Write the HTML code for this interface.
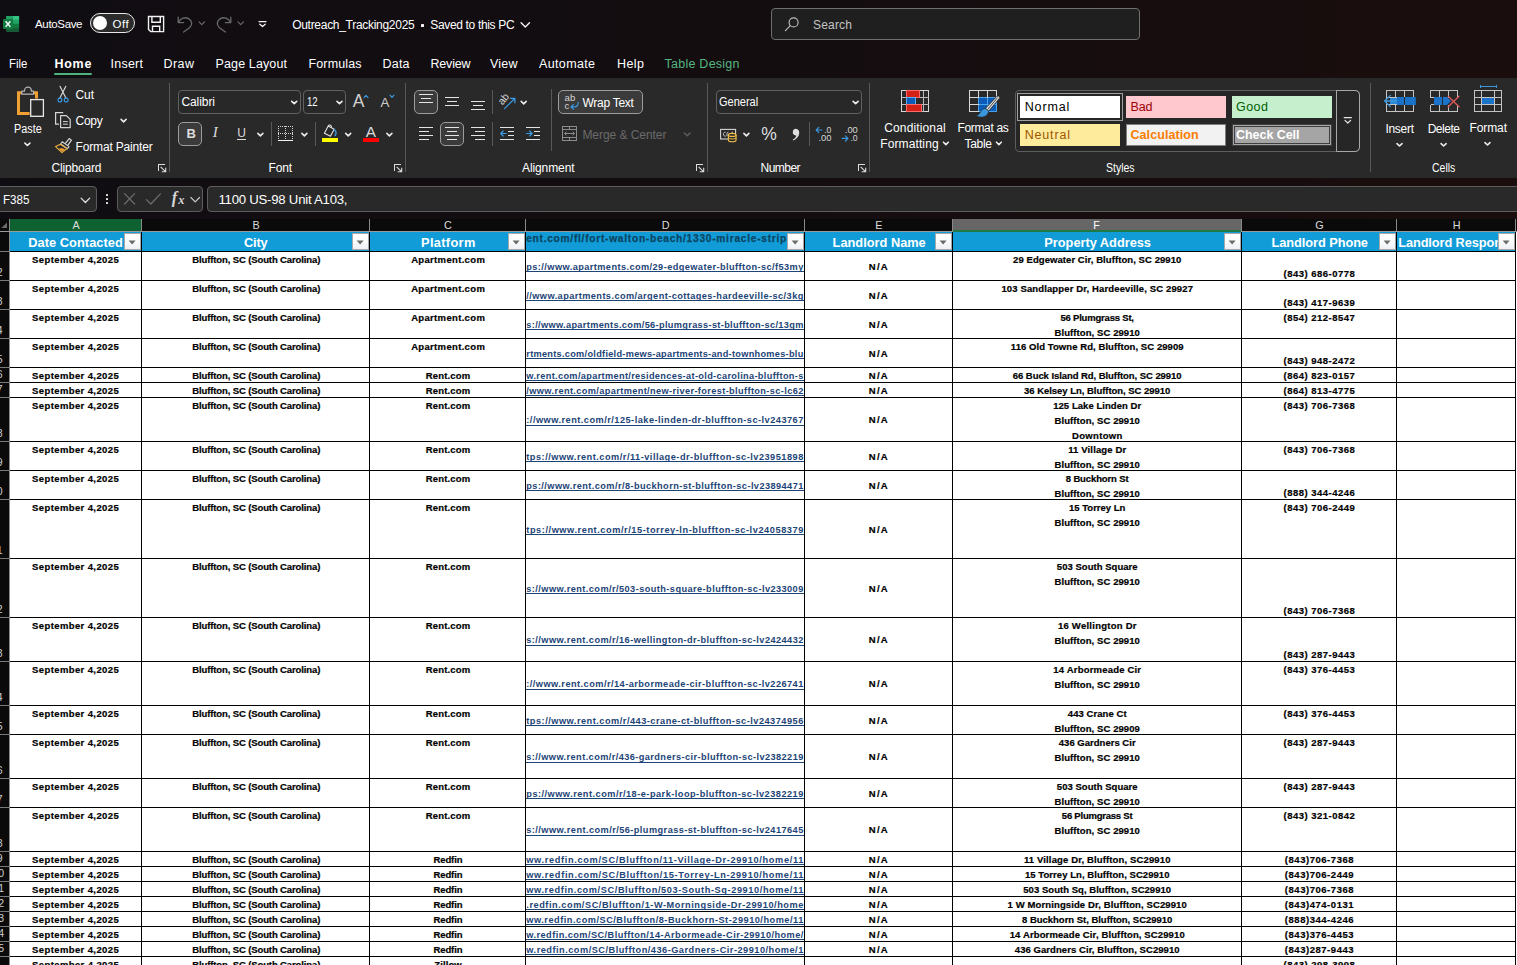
<!DOCTYPE html>
<html lang="en"><head><meta charset="utf-8"><title>Outreach_Tracking2025 - Excel</title>
<style>
html,body{margin:0;padding:0;}
body{width:1517px;height:965px;overflow:hidden;position:relative;background:#fff;font-family:"Liberation Sans",sans-serif;}
.b{position:absolute;display:block;}
.t{position:absolute;white-space:pre;line-height:1em;color:#fff;font-family:"Liberation Sans",sans-serif;}
.c{position:absolute;overflow:hidden;}
</style></head><body>
<div class="b" style="left:0px;top:0px;width:1517px;height:219px;background:linear-gradient(90deg,#100d12 0%,#130d10 45%,#1a0d0d 100%);"></div>
<div class="b" style="left:0px;top:78px;width:1517px;height:100px;background:#292929;"></div>
<svg class="b" style="left:0px;top:14px;" width="22" height="20" viewBox="0 0 22 20">
<rect x="6.1" y="2" width="13" height="16" rx="0.8" fill="#185c37"/>
<rect x="6.1" y="2" width="6.7" height="3.9" fill="#21a366"/><rect x="12.8" y="2" width="6.3" height="3.9" fill="#33c481"/>
<rect x="6.1" y="5.9" width="6.7" height="4" fill="#107c41"/><rect x="12.8" y="5.9" width="6.3" height="4" fill="#21a366"/>
<rect x="6.1" y="9.9" width="6.7" height="4" fill="#0e6a38"/><rect x="12.8" y="9.9" width="6.3" height="4" fill="#107c41"/>
<rect x="3" y="5.1" width="10.1" height="9.9" rx="0.8" fill="#107c41"/>
<path d="M5.6 7.2L10.4 12.9M10.4 7.2L5.6 12.9" stroke="#fff" stroke-width="1.45" fill="none"/></svg>
<span class="t" style="left:35.00px;top:19.00px;font-size:11.5px;letter-spacing:-0.339px;">AutoSave</span>
<div class="b" style="left:90px;top:13px;width:45px;height:20px;background:#2b2b2b;border:1.3px solid #e8e8e8;box-sizing:border-box;border-radius:10px;"></div>
<div class="b" style="left:93px;top:16px;width:14px;height:14px;background:#fff;border-radius:7px;"></div>
<span class="t" style="left:112.60px;top:19.00px;font-size:11.5px;letter-spacing:0.530px;">Off</span>
<svg class="b" style="left:147px;top:15px;" width="19" height="19" viewBox="0 0 19 19"><path d="M1.5 1.5H16.6V16.6H3.7L1.5 14.4Z" fill="none" stroke="#f2f2f2" stroke-width="1.4" stroke-linejoin="miter"/>
<path d="M4.9 1.5V7.2H13.3V1.5" fill="none" stroke="#f2f2f2" stroke-width="1.4"/><path d="M5.5 16.6V11.2H12.7V16.6" fill="none" stroke="#f2f2f2" stroke-width="1.4"/></svg>
<svg class="b" style="left:176px;top:14px;" width="18" height="19" viewBox="0 0 18 19"><path d="M2.2 3.2V8.6H7.6" fill="none" stroke="#6a6a6a" stroke-width="1.3" stroke-linecap="round" stroke-linejoin="round"/>
<path d="M2.6 8.2C4.4 4.4 9 2.6 12.6 4.6C16.4 6.8 16.6 11 13.8 13.4L7.6 18" fill="none" stroke="#6a6a6a" stroke-width="1.3" stroke-linecap="round"/></svg>
<svg class="b" style="left:0;top:0" width="1517" height="230" viewBox="0 0 1517 230"><path d="M199.05 21.90L201.80 24.70L204.55 21.90" fill="none" stroke="#6a6a6a" stroke-width="1.2" stroke-linecap="round" stroke-linejoin="round"/></svg>
<svg class="b" style="left:215px;top:14px;" width="18" height="19" viewBox="0 0 18 19"><path d="M15.8 3.2V8.6H10.4" fill="none" stroke="#6a6a6a" stroke-width="1.3" stroke-linecap="round" stroke-linejoin="round"/>
<path d="M15.4 8.2C13.6 4.4 9 2.6 5.4 4.6C1.6 6.8 1.4 11 4.2 13.4L10.4 18" fill="none" stroke="#6a6a6a" stroke-width="1.3" stroke-linecap="round"/></svg>
<svg class="b" style="left:0;top:0" width="1517" height="230" viewBox="0 0 1517 230"><path d="M237.95 21.90L240.70 24.70L243.45 21.90" fill="none" stroke="#6a6a6a" stroke-width="1.2" stroke-linecap="round" stroke-linejoin="round"/></svg>
<svg class="b" style="left:257px;top:19px;" width="11" height="10" viewBox="0 0 11 10"><path d="M2 2.6H9" stroke="#f2f2f2" stroke-width="1.3" stroke-linecap="round"/><path d="M2.8 5.2L5.5 7.6L8.2 5.2" fill="none" stroke="#f2f2f2" stroke-width="1.3" stroke-linecap="round" stroke-linejoin="round"/></svg>
<span class="t" style="left:292.20px;top:19.00px;font-size:12px;letter-spacing:-0.290px;">Outreach_Tracking2025</span>
<div class="b" style="left:421px;top:24px;width:3px;height:3px;background:#f2f2f2;border-radius:0.5px;"></div>
<span class="t" style="left:430.30px;top:19.00px;font-size:12px;letter-spacing:-0.339px;">Saved to this PC</span>
<svg class="b" style="left:0;top:0" width="1517" height="230" viewBox="0 0 1517 230"><path d="M521.10 22.80L525.30 27.00L529.50 22.80" fill="none" stroke="#f2f2f2" stroke-width="1.4" stroke-linecap="round" stroke-linejoin="round"/></svg>
<div class="b" style="left:771px;top:8px;width:368.5px;height:32px;background:#1f1f1f;border:1px solid #6f6f6f;box-sizing:border-box;border-radius:4px;"></div>
<svg class="b" style="left:783px;top:16px;" width="17" height="17" viewBox="0 0 17 17"><circle cx="10.6" cy="6.4" r="4.5" fill="none" stroke="#bdbdbd" stroke-width="1.15"/><path d="M7.3 9.7L2.4 14.6" stroke="#bdbdbd" stroke-width="1.15" stroke-linecap="round"/></svg>
<span class="t" style="left:813.00px;top:19.00px;font-size:12px;color:#c4c4c4;letter-spacing:0.194px;">Search</span>
<span class="t" style="left:9.30px;top:58.00px;font-size:12.5px;transform:scaleX(0.9129);transform-origin:0 0;">File</span>
<span class="t" style="left:54.40px;top:58.00px;font-size:12.5px;font-weight:700;letter-spacing:0.755px;">Home</span>
<div class="b" style="left:54px;top:73px;width:38px;height:2.4px;background:#4fb27c;border-radius:1.2px;"></div>
<span class="t" style="left:110.50px;top:58.00px;font-size:12.5px;letter-spacing:0.247px;">Insert</span>
<span class="t" style="left:163.50px;top:58.00px;font-size:12.5px;letter-spacing:0.443px;">Draw</span>
<span class="t" style="left:215.50px;top:58.00px;font-size:12.5px;letter-spacing:0.130px;">Page Layout</span>
<span class="t" style="left:308.50px;top:58.00px;font-size:12.5px;letter-spacing:0.129px;">Formulas</span>
<span class="t" style="left:382.50px;top:58.00px;font-size:12.5px;letter-spacing:0.198px;">Data</span>
<span class="t" style="left:430.50px;top:58.00px;font-size:12.5px;letter-spacing:-0.200px;">Review</span>
<span class="t" style="left:490.00px;top:58.00px;font-size:12.5px;letter-spacing:0.208px;">View</span>
<span class="t" style="left:539.00px;top:58.00px;font-size:12.5px;letter-spacing:0.355px;">Automate</span>
<span class="t" style="left:617.00px;top:58.00px;font-size:12.5px;letter-spacing:0.427px;">Help</span>
<span class="t" style="left:664.50px;top:58.00px;font-size:12.5px;color:#55b581;letter-spacing:0.249px;">Table Design</span>
<div class="b" style="left:169px;top:83px;width:1px;height:89px;background:#585858;"></div>
<div class="b" style="left:405px;top:83px;width:1px;height:89px;background:#585858;"></div>
<div class="b" style="left:707px;top:83px;width:1px;height:89px;background:#585858;"></div>
<div class="b" style="left:869px;top:83px;width:1px;height:89px;background:#585858;"></div>
<div class="b" style="left:1370px;top:83px;width:1px;height:89px;background:#585858;"></div>
<div class="b" style="left:271px;top:122px;width:1px;height:24px;background:#585858;"></div>
<div class="b" style="left:315px;top:122px;width:1px;height:24px;background:#585858;"></div>
<div class="b" style="left:492px;top:90px;width:1px;height:24px;background:#585858;"></div>
<div class="b" style="left:492px;top:122px;width:1px;height:24px;background:#585858;"></div>
<div class="b" style="left:551px;top:89px;width:1px;height:62px;background:#585858;"></div>
<div class="b" style="left:809px;top:122px;width:1px;height:24px;background:#585858;"></div>
<svg class="b" style="left:15px;top:85px;" width="31" height="34" viewBox="0 0 31 34">
<path d="M21.5 13.6V7.7H3.5V28.5H14.6" fill="none" stroke="#f0a030" stroke-width="3"/>
<path d="M6.8 9.2V6.2H9.4C9.4 0.8 16.4 0.8 16.4 6.2H18.6V9.2Z" fill="#292929" stroke="#b4b4b4" stroke-width="1.2" stroke-linejoin="round"/>
<rect x="15.7" y="14.6" width="12.7" height="16.7" fill="#292929" stroke="#e8e8e8" stroke-width="1.3"/></svg>
<span class="t" style="left:14.40px;top:123.00px;font-size:12px;transform:scaleX(0.9026);transform-origin:0 0;">Paste</span>
<svg class="b" style="left:0;top:0" width="1517" height="230" viewBox="0 0 1517 230"><path d="M24.90 143.10L27.40 145.50L29.90 143.10" fill="none" stroke="#ececec" stroke-width="1.6" stroke-linecap="round" stroke-linejoin="round"/></svg>
<svg class="b" style="left:56px;top:85px;" width="14" height="18" viewBox="0 0 14 18"><path d="M4.1 1.4L10 13.2M9.7 1.4L3.8 13.2" stroke="#d6d6d6" stroke-width="1.2" fill="none" stroke-linecap="round"/>
<rect x="2.1" y="13.1" width="3.7" height="3.7" rx="1.3" fill="none" stroke="#3a96dd" stroke-width="1.2"/><rect x="8.3" y="13.1" width="3.7" height="3.7" rx="1.3" fill="none" stroke="#3a96dd" stroke-width="1.2"/></svg>
<span class="t" style="left:75.60px;top:89.00px;font-size:12px;letter-spacing:-0.144px;">Cut</span>
<svg class="b" style="left:54px;top:111px;" width="18" height="18" viewBox="0 0 18 18"><path d="M9.2 1.6H1.6V13.2H5" fill="none" stroke="#d6d6d6" stroke-width="1.2"/>
<path d="M6.6 4.6H12.4L16.2 8.4V16.6H6.6Z" fill="#292929" stroke="#d6d6d6" stroke-width="1.2" stroke-linejoin="round"/>
<path d="M9 10.6H13.8M9 13.2H13.8" stroke="#d6d6d6" stroke-width="1"/></svg>
<span class="t" style="left:75.60px;top:115.00px;font-size:12px;letter-spacing:-0.305px;">Copy</span>
<svg class="b" style="left:0;top:0" width="1517" height="230" viewBox="0 0 1517 230"><path d="M121.10 119.40L123.60 121.80L126.10 119.40" fill="none" stroke="#ececec" stroke-width="1.6" stroke-linecap="round" stroke-linejoin="round"/></svg>
<svg class="b" style="left:54px;top:137px;" width="19" height="17" viewBox="0 0 19 17"><path d="M11.2 6.6L15.2 1.6L17.4 3.2L13.8 8.4" fill="none" stroke="#d6d6d6" stroke-width="1.2" stroke-linejoin="round"/>
<path d="M8.2 4.8L15 9.6L13.4 11.8L6.6 7Z" fill="none" stroke="#d6d6d6" stroke-width="1.1" stroke-linejoin="round"/>
<path d="M6.4 7.2L1.6 9.6L8 15.6L13 11.6Z" fill="none" stroke="#f0b040" stroke-width="1.1" stroke-linejoin="round"/><path d="M4.6 11.6L8 14.8L11 12.4L8.6 11.2Z" fill="#f0a030"/></svg>
<span class="t" style="left:75.60px;top:141.00px;font-size:12px;letter-spacing:-0.166px;">Format Painter</span>
<span class="t" style="left:51.60px;top:162.00px;font-size:12px;letter-spacing:-0.184px;">Clipboard</span>
<svg class="b" style="left:158px;top:164px;" width="9" height="9" viewBox="0 0 9 9"><path d="M0.5 7V0.6H6.8" fill="none" stroke="#dcdcdc" stroke-width="1" shape-rendering="crispEdges"/><path d="M2.6 2.8L7.5 7.7M3.7 7.7H7.7V3.7" fill="none" stroke="#dcdcdc" stroke-width="1.1"/></svg>
<div class="b" style="left:178px;top:90px;width:123px;height:24px;background:#282828;border:1px solid #616161;box-sizing:border-box;border-radius:4px;"></div>
<span class="t" style="left:181.40px;top:96.00px;font-size:12px;letter-spacing:-0.069px;">Calibri</span>
<svg class="b" style="left:0;top:0" width="1517" height="230" viewBox="0 0 1517 230"><path d="M291.70 101.30L294.20 103.70L296.70 101.30" fill="none" stroke="#ececec" stroke-width="1.6" stroke-linecap="round" stroke-linejoin="round"/></svg>
<div class="b" style="left:303px;top:90px;width:43px;height:24px;background:#282828;border:1px solid #616161;box-sizing:border-box;border-radius:4px;"></div>
<span class="t" style="left:307.30px;top:96.00px;font-size:12px;transform:scaleX(0.8009);transform-origin:0 0;">12</span>
<svg class="b" style="left:0;top:0" width="1517" height="230" viewBox="0 0 1517 230"><path d="M337.00 101.30L339.50 103.70L342.00 101.30" fill="none" stroke="#ececec" stroke-width="1.6" stroke-linecap="round" stroke-linejoin="round"/></svg>
<span class="t" style="left:352.80px;top:93.00px;font-size:17.5px;color:#d0d0d0;">A</span>
<svg class="b" style="left:363.2px;top:93.6px;" width="7" height="5" viewBox="0 0 7 5"><path d="M1 3.6L3 1.4L5 3.6" fill="none" stroke="#3a96dd" stroke-width="1.2" stroke-linecap="round" stroke-linejoin="round"/></svg>
<span class="t" style="left:380.40px;top:96.00px;font-size:13.3px;color:#d0d0d0;">A</span>
<svg class="b" style="left:388.6px;top:93.8px;" width="7" height="5" viewBox="0 0 7 5"><path d="M1 1.2L3 3.4L5 1.2" fill="none" stroke="#3a96dd" stroke-width="1.2" stroke-linecap="round" stroke-linejoin="round"/></svg>
<div class="b" style="left:178px;top:122px;width:24px;height:24px;background:#3b3b3b;border:1px solid #9c9c9c;box-sizing:border-box;border-radius:5px;"></div>
<span class="t" style="left:186.60px;top:127.00px;font-size:13px;font-weight:700;color:#dcdcdc;">B</span>
<span class="t" style="left:212.80px;top:125.00px;font-size:15px;font-style:italic;color:#dcdcdc;font-family:'Liberation Serif';">I</span>
<span class="t" style="left:237.20px;top:127.00px;font-size:12px;color:#dcdcdc;">U</span>
<div class="b" style="left:237px;top:139px;width:9.4px;height:1.1px;background:#dcdcdc;"></div>
<svg class="b" style="left:0;top:0" width="1517" height="230" viewBox="0 0 1517 230"><path d="M257.90 133.40L260.40 135.80L262.90 133.40" fill="none" stroke="#ececec" stroke-width="1.6" stroke-linecap="round" stroke-linejoin="round"/></svg>
<svg class="b" style="left:277px;top:124px;" width="17" height="19" viewBox="0 0 17 19"><g shape-rendering="crispEdges" fill="none" stroke="#d0d0d0" stroke-width="1" stroke-dasharray="1 1"><path d="M1 2.5H16M1 9.5H16M1.5 2V16M8.5 2V16M15.5 2V16"/></g>
<path d="M1 16.6H16" stroke="#f0f0f0" stroke-width="1.4" shape-rendering="crispEdges"/></svg>
<svg class="b" style="left:0;top:0" width="1517" height="230" viewBox="0 0 1517 230"><path d="M301.90 133.40L304.40 135.80L306.90 133.40" fill="none" stroke="#ececec" stroke-width="1.6" stroke-linecap="round" stroke-linejoin="round"/></svg>
<svg class="b" style="left:321px;top:124px;" width="18" height="14" viewBox="0 0 18 14"><path d="M7.2 2L3.4 9.2L9.4 12.2L13.2 5.2Z" fill="none" stroke="#e0e0e0" stroke-width="1.1" stroke-linejoin="round"/>
<path d="M7.2 2C8 0.4 10.4 0.6 10.6 3.6" fill="none" stroke="#e0e0e0" stroke-width="1.1"/>
<path d="M13.4 5.6C15.2 7 15.4 9.6 14.2 11.4" fill="none" stroke="#3a96dd" stroke-width="1.6" stroke-linecap="round"/></svg>
<div class="b" style="left:322px;top:138px;width:16px;height:4.2px;background:#ffff00;"></div>
<svg class="b" style="left:0;top:0" width="1517" height="230" viewBox="0 0 1517 230"><path d="M345.70 133.40L348.20 135.80L350.70 133.40" fill="none" stroke="#ececec" stroke-width="1.6" stroke-linecap="round" stroke-linejoin="round"/></svg>
<span class="t" style="left:365.80px;top:124.00px;font-size:15.3px;color:#dcdcdc;">A</span>
<div class="b" style="left:363px;top:138px;width:16.2px;height:4.2px;background:#ff0000;"></div>
<svg class="b" style="left:0;top:0" width="1517" height="230" viewBox="0 0 1517 230"><path d="M386.90 133.40L389.40 135.80L391.90 133.40" fill="none" stroke="#ececec" stroke-width="1.6" stroke-linecap="round" stroke-linejoin="round"/></svg>
<span class="t" style="left:268.40px;top:162.00px;font-size:12px;letter-spacing:-0.072px;">Font</span>
<svg class="b" style="left:394px;top:164px;" width="9" height="9" viewBox="0 0 9 9"><path d="M0.5 7V0.6H6.8" fill="none" stroke="#dcdcdc" stroke-width="1" shape-rendering="crispEdges"/><path d="M2.6 2.8L7.5 7.7M3.7 7.7H7.7V3.7" fill="none" stroke="#dcdcdc" stroke-width="1.1"/></svg>
<div class="b" style="left:414px;top:90px;width:24px;height:24px;background:#3b3b3b;border:1px solid #9c9c9c;box-sizing:border-box;border-radius:5px;"></div>
<div class="b" style="left:419.0px;top:94px;width:14px;height:1px;background:#e4e4e4;"></div>
<div class="b" style="left:421.0px;top:98px;width:10px;height:1px;background:#e4e4e4;"></div>
<div class="b" style="left:419.0px;top:102px;width:14px;height:1px;background:#e4e4e4;"></div>
<div class="b" style="left:445.0px;top:97px;width:14px;height:1px;background:#e4e4e4;"></div>
<div class="b" style="left:447.0px;top:101px;width:10px;height:1px;background:#e4e4e4;"></div>
<div class="b" style="left:445.0px;top:105px;width:14px;height:1px;background:#e4e4e4;"></div>
<div class="b" style="left:471.0px;top:101px;width:14px;height:1px;background:#e4e4e4;"></div>
<div class="b" style="left:473.0px;top:105px;width:10px;height:1px;background:#e4e4e4;"></div>
<div class="b" style="left:471.0px;top:109px;width:14px;height:1px;background:#e4e4e4;"></div>
<svg class="b" style="left:498px;top:92px;" width="19" height="19" viewBox="0 0 19 19"><text x="0" y="0" transform="translate(4.4 13.6) rotate(-50)" font-family="Liberation Sans" font-size="10.4" fill="#d6d6d6">ab</text>
<path d="M6.5 16.7L16.7 6.5M12.4 6.3H16.9V10.8" fill="none" stroke="#3a9be6" stroke-width="1.2" stroke-linecap="round" stroke-linejoin="round"/></svg>
<svg class="b" style="left:0;top:0" width="1517" height="230" viewBox="0 0 1517 230"><path d="M521.20 101.40L523.70 103.80L526.20 101.40" fill="none" stroke="#ececec" stroke-width="1.6" stroke-linecap="round" stroke-linejoin="round"/></svg>
<div class="b" style="left:419.0px;top:127px;width:14px;height:1px;background:#e4e4e4;"></div>
<div class="b" style="left:419.0px;top:131px;width:10px;height:1px;background:#e4e4e4;"></div>
<div class="b" style="left:419.0px;top:135px;width:14px;height:1px;background:#e4e4e4;"></div>
<div class="b" style="left:419.0px;top:139px;width:10px;height:1px;background:#e4e4e4;"></div>
<div class="b" style="left:440px;top:122px;width:24px;height:24px;background:#3b3b3b;border:1px solid #9c9c9c;box-sizing:border-box;border-radius:5px;"></div>
<div class="b" style="left:445.0px;top:127px;width:14px;height:1px;background:#e4e4e4;"></div>
<div class="b" style="left:447.0px;top:131px;width:10px;height:1px;background:#e4e4e4;"></div>
<div class="b" style="left:445.0px;top:135px;width:14px;height:1px;background:#e4e4e4;"></div>
<div class="b" style="left:447.0px;top:139px;width:10px;height:1px;background:#e4e4e4;"></div>
<div class="b" style="left:471.0px;top:127px;width:14px;height:1px;background:#e4e4e4;"></div>
<div class="b" style="left:475.0px;top:131px;width:10px;height:1px;background:#e4e4e4;"></div>
<div class="b" style="left:471.0px;top:135px;width:14px;height:1px;background:#e4e4e4;"></div>
<div class="b" style="left:475.0px;top:139px;width:10px;height:1px;background:#e4e4e4;"></div>
<div class="b" style="left:500.0px;top:127px;width:14px;height:1px;background:#e4e4e4;"></div>
<div class="b" style="left:500.0px;top:139px;width:14px;height:1px;background:#e4e4e4;"></div>
<div class="b" style="left:508.0px;top:131px;width:6px;height:1px;background:#e4e4e4;"></div>
<div class="b" style="left:508.0px;top:135px;width:6px;height:1px;background:#e4e4e4;"></div>
<svg class="b" style="left:499.5px;top:129px;" width="8" height="8" viewBox="0 0 8 8"><path d="M6.2 4.5H1M3.2 2L0.7 4.5L3.2 7" fill="none" stroke="#3a9be6" stroke-width="1.15" stroke-linecap="round" stroke-linejoin="round"/></svg>
<div class="b" style="left:526.0px;top:127px;width:14px;height:1px;background:#e4e4e4;"></div>
<div class="b" style="left:526.0px;top:139px;width:14px;height:1px;background:#e4e4e4;"></div>
<div class="b" style="left:534.0px;top:131px;width:6px;height:1px;background:#e4e4e4;"></div>
<div class="b" style="left:534.0px;top:135px;width:6px;height:1px;background:#e4e4e4;"></div>
<svg class="b" style="left:525.5px;top:129px;" width="8" height="8" viewBox="0 0 8 8"><path d="M0.6 4.5H5.8M3.6 2L6.1 4.5L3.6 7" fill="none" stroke="#3a9be6" stroke-width="1.15" stroke-linecap="round" stroke-linejoin="round"/></svg>
<div class="b" style="left:558px;top:90px;width:85px;height:24px;background:#3b3b3b;border:1px solid #9c9c9c;box-sizing:border-box;border-radius:5px;"></div>
<svg class="b" style="left:563.5px;top:93px;" width="16" height="18" viewBox="0 0 16 18"><text x="0.6" y="7.9" font-family="Liberation Sans" font-size="9.6" fill="#d6d6d6">ab</text><text x="0.6" y="15.6" font-family="Liberation Sans" font-size="9.6" fill="#d6d6d6">c</text>
<path d="M14.2 9.4C14.6 12.4 12.6 13.9 10.4 13.9H7.2M9.4 11.6L7 13.9L9.4 16.2" fill="none" stroke="#3a9be6" stroke-width="1.2" stroke-linecap="round" stroke-linejoin="round"/></svg>
<span class="t" style="left:582.40px;top:97.00px;font-size:12px;letter-spacing:-0.260px;">Wrap Text</span>
<svg class="b" style="left:562px;top:126px;" width="16" height="16" viewBox="0 0 16 16"><g shape-rendering="crispEdges" fill="none" stroke="#8c8c8c" stroke-width="1"><rect x="0.5" y="0.5" width="14" height="14"/>
<path d="M0.5 3.5H14.5M0.5 11.5H14.5M7.5 0.5V3.5M7.5 11.5V14.5"/></g>
<path d="M2.6 7.5H12.4M4.4 5.7L2.6 7.5L4.4 9.3M10.6 5.7L12.4 7.5L10.6 9.3" stroke="#8c8c8c" stroke-width="1" fill="none"/></svg>
<span class="t" style="left:582.40px;top:129.00px;font-size:12px;color:#6b6b6b;letter-spacing:-0.046px;">Merge &amp; Center</span>
<svg class="b" style="left:0;top:0" width="1517" height="230" viewBox="0 0 1517 230"><path d="M684.40 133.00L687.20 135.80L690.00 133.00" fill="none" stroke="#5c5c5c" stroke-width="1.6" stroke-linecap="round" stroke-linejoin="round"/></svg>
<span class="t" style="left:522.00px;top:162.00px;font-size:12px;letter-spacing:-0.097px;">Alignment</span>
<svg class="b" style="left:696px;top:164px;" width="9" height="9" viewBox="0 0 9 9"><path d="M0.5 7V0.6H6.8" fill="none" stroke="#dcdcdc" stroke-width="1" shape-rendering="crispEdges"/><path d="M2.6 2.8L7.5 7.7M3.7 7.7H7.7V3.7" fill="none" stroke="#dcdcdc" stroke-width="1.1"/></svg>
<div class="b" style="left:716px;top:90px;width:146px;height:24px;background:#282828;border:1px solid #616161;box-sizing:border-box;border-radius:4px;"></div>
<span class="t" style="left:719.30px;top:96.00px;font-size:12px;transform:scaleX(0.9180);transform-origin:0 0;">General</span>
<svg class="b" style="left:0;top:0" width="1517" height="230" viewBox="0 0 1517 230"><path d="M853.10 101.30L855.60 103.70L858.10 101.30" fill="none" stroke="#ececec" stroke-width="1.6" stroke-linecap="round" stroke-linejoin="round"/></svg>
<svg class="b" style="left:719px;top:128px;" width="19" height="15" viewBox="0 0 19 15"><rect x="1.6" y="1.4" width="15" height="9.6" fill="none" stroke="#d6d6d6" stroke-width="1.1"/>
<path d="M6.6 4.2C5 4.2 4.4 5.2 4.4 6.2C4.4 7.2 5 8.2 6.6 8.2M9.4 4.2C8.4 4.2 8 5 8 6.2V8.2M12.6 4.2H13.8" stroke="#d6d6d6" stroke-width="1" fill="none"/>
<path d="M9.4 6.9V12.2C9.4 14.2 17 14.2 17 12.2V6.9" fill="#292929" stroke="#f2c14a" stroke-width="1.1"/>
<ellipse cx="13.2" cy="6.9" rx="3.8" ry="1.5" fill="#292929" stroke="#f2c14a" stroke-width="1.1"/><path d="M9.4 9.6C9.4 11.4 17 11.4 17 9.6" fill="none" stroke="#f2c14a" stroke-width="1"/></svg>
<svg class="b" style="left:0;top:0" width="1517" height="230" viewBox="0 0 1517 230"><path d="M743.90 133.40L746.40 135.80L748.90 133.40" fill="none" stroke="#ececec" stroke-width="1.6" stroke-linecap="round" stroke-linejoin="round"/></svg>
<span class="t" style="left:761.20px;top:126.00px;font-size:17.5px;color:#dedede;">%</span>
<svg class="b" style="left:791px;top:128px;" width="10" height="14" viewBox="0 0 10 14"><path d="M4.8 0.8C7.4 0.8 8.6 3 8.2 5.6C7.8 8.6 5.6 11.2 2.2 12.4L1.8 11.6C4 10.4 5 9 5.2 7.4C2.6 7.6 1.6 5.8 1.8 4C2 2 3.2 0.8 4.8 0.8Z" fill="#dedede"/></svg>
<svg class="b" style="left:815px;top:125px;" width="18" height="18" viewBox="0 0 18 18"><path d="M7 5H1.4M3.8 2.4L1.2 5L3.8 7.6" fill="none" stroke="#3a96dd" stroke-width="1.2" stroke-linecap="round" stroke-linejoin="round"/>
<text x="9.2" y="7.6" font-family="Liberation Sans" font-size="9.2" fill="#d6d6d6" textLength="7.2" lengthAdjust="spacingAndGlyphs">.0</text><text x="3.4" y="15.8" font-family="Liberation Sans" font-size="9.2" fill="#d6d6d6" textLength="13" lengthAdjust="spacingAndGlyphs">.00</text></svg>
<svg class="b" style="left:841px;top:125px;" width="18" height="18" viewBox="0 0 18 18"><text x="3.8" y="7.6" font-family="Liberation Sans" font-size="9.2" fill="#d6d6d6" textLength="13" lengthAdjust="spacingAndGlyphs">.00</text>
<path d="M1.2 13.4H6.8M4.4 10.8L7 13.4L4.4 16" fill="none" stroke="#3a96dd" stroke-width="1.2" stroke-linecap="round" stroke-linejoin="round"/>
<text x="9.4" y="15.8" font-family="Liberation Sans" font-size="9.2" fill="#d6d6d6" textLength="7.2" lengthAdjust="spacingAndGlyphs">.0</text></svg>
<span class="t" style="left:760.60px;top:162.00px;font-size:12px;letter-spacing:-0.537px;">Number</span>
<svg class="b" style="left:858px;top:164px;" width="9" height="9" viewBox="0 0 9 9"><path d="M0.5 7V0.6H6.8" fill="none" stroke="#dcdcdc" stroke-width="1" shape-rendering="crispEdges"/><path d="M2.6 2.8L7.5 7.7M3.7 7.7H7.7V3.7" fill="none" stroke="#dcdcdc" stroke-width="1.1"/></svg>
<svg class="b" style="left:900px;top:89px;" width="31" height="24" viewBox="0 0 31 24"><g shape-rendering="crispEdges" fill="none" stroke="#d8d8d8" stroke-width="1"><rect x="1.5" y="1.5" width="27" height="21"/>
<path d="M1.5 8.5H28.5M1.5 15.5H28.5M6.5 1.5V22.5M23.5 1.5V22.5" stroke="#b8b8b8"/></g>
<rect x="6.5" y="1.5" width="12.5" height="6.5" fill="#d42115" stroke="#ff6b6b" stroke-width="1" shape-rendering="crispEdges"/>
<rect x="6.5" y="8.5" width="8.5" height="6.5" fill="#0a5cb8" stroke="#58aef0" stroke-width="1" shape-rendering="crispEdges"/>
<rect x="6.5" y="15.5" width="14.5" height="7" fill="#d42115" stroke="#ff6b6b" stroke-width="1" shape-rendering="crispEdges"/></svg>
<span class="t" style="left:884.20px;top:122.00px;font-size:12px;letter-spacing:0.145px;">Conditional</span>
<span class="t" style="left:880.30px;top:138.00px;font-size:12px;letter-spacing:0.105px;">Formatting</span>
<svg class="b" style="left:0;top:0" width="1517" height="230" viewBox="0 0 1517 230"><path d="M943.50 142.20L945.90 144.60L948.30 142.20" fill="none" stroke="#ececec" stroke-width="1.6" stroke-linecap="round" stroke-linejoin="round"/></svg>
<svg class="b" style="left:968px;top:89px;" width="33" height="29" viewBox="0 0 33 29"><rect x="10.5" y="8.5" width="18" height="14" fill="#0a5cb8" shape-rendering="crispEdges"/>
<g shape-rendering="crispEdges" fill="none" stroke-width="1"><path d="M10.5 15.5H28.5M19.5 8.5V22.5M10.5 8.5H28.5M10.5 8.5V22.5M28.5 8.5V22.5M10.5 22.5H28.5" stroke="#4aa3e8"/>
<path d="M1.5 22.5V1.5H28.5V8.5M1.5 22.5H10.5M1.5 8.5H10.5M1.5 15.5H10.5M10.5 1.5V8.5M19.5 1.5V8.5" stroke="#d8d8d8"/></g>
<path d="M29 7.2C30.6 6.2 32.4 7.8 31.4 9.4L20.8 22L17.4 19.4Z" fill="#dcdcdc" stroke="#292929" stroke-width="0.9"/><path d="M29.6 8.6L20 20" stroke="#292929" stroke-width="0.8"/>
<path d="M17.4 19.4L20.6 22C20.2 27 14.4 30 8.2 26.8C12.6 26 12.4 19.6 17.4 19.4Z" fill="#3a96dd" stroke="#292929" stroke-width="0.6"/></svg>
<span class="t" style="left:957.40px;top:122.00px;font-size:12px;letter-spacing:-0.327px;">Format as</span>
<span class="t" style="left:964.60px;top:138.00px;font-size:12px;letter-spacing:-0.347px;">Table</span>
<svg class="b" style="left:0;top:0" width="1517" height="230" viewBox="0 0 1517 230"><path d="M996.50 142.20L998.90 144.60L1001.30 142.20" fill="none" stroke="#ececec" stroke-width="1.6" stroke-linecap="round" stroke-linejoin="round"/></svg>
<div class="b" style="left:1015px;top:90px;width:345px;height:62px;background:#262626;border:1px solid #5e5e5e;box-sizing:border-box;border-radius:4px;"></div>
<div class="b" style="left:1336px;top:90px;width:24px;height:62px;border:1px solid #a8a8a8;box-sizing:border-box;border-radius:0 5px 5px 0;"></div>
<div class="b" style="left:1017px;top:93px;width:106px;height:28px;background:#262626;border:1px solid #a0a0a0;box-sizing:border-box;"></div>
<div class="b" style="left:1020px;top:96px;width:100.3px;height:22px;background:#ffffff;"></div>
<div class="b" style="left:1126px;top:96px;width:100px;height:22px;background:#ffc7ce;"></div>
<div class="b" style="left:1232px;top:96px;width:100px;height:22px;background:#c6efce;"></div>
<div class="b" style="left:1020px;top:124.3px;width:100.3px;height:22px;background:#ffeb9c;"></div>
<div class="b" style="left:1126px;top:124.3px;width:100px;height:22px;background:#f2f2f2;border:1px solid #7f7f7f;box-sizing:border-box;"></div>
<div class="b" style="left:1232px;top:124.3px;width:100px;height:22px;background:#a5a5a5;border:3px double #3f3f3f;box-sizing:border-box;"></div>
<span class="t" style="left:1024.70px;top:101.00px;font-size:12.5px;color:#000;letter-spacing:0.861px;">Normal</span>
<span class="t" style="left:1130.50px;top:101.00px;font-size:12.5px;color:#9c0006;letter-spacing:-0.175px;">Bad</span>
<span class="t" style="left:1236.00px;top:101.00px;font-size:12.5px;color:#006100;letter-spacing:0.469px;">Good</span>
<span class="t" style="left:1024.70px;top:129.00px;font-size:12.5px;color:#9c5700;letter-spacing:0.834px;">Neutral</span>
<span class="t" style="left:1130.50px;top:129.00px;font-size:12.5px;font-weight:700;color:#fa7d00;letter-spacing:0.072px;">Calculation</span>
<span class="t" style="left:1236.00px;top:129.00px;font-size:12.5px;font-weight:700;color:#ffffff;letter-spacing:-0.047px;">Check Cell</span>
<svg class="b" style="left:1343px;top:116px;" width="10" height="9" viewBox="0 0 10 9"><path d="M1.2 1.6H8.4" stroke="#e6e6e6" stroke-width="1.2" stroke-linecap="round"/><path d="M2 4.4L4.8 7L7.6 4.4" fill="none" stroke="#e6e6e6" stroke-width="1.2" stroke-linecap="round" stroke-linejoin="round"/></svg>
<span class="t" style="left:1106.00px;top:162.00px;font-size:12px;transform:scaleX(0.8750);transform-origin:0 0;">Styles</span>
<svg class="b" style="left:1383px;top:85px;" width="34" height="28" viewBox="0 0 34 28"><g shape-rendering="crispEdges" fill="none" stroke="#c4c4c4" stroke-width="1"><rect x="3.5" y="5.5" width="27" height="21"/>
<path d="M3.5 12.5H30.5M3.5 19.5H30.5M12.5 5.5V26.5M21.5 5.5V26.5"/></g>
<rect x="14" y="12" width="18.8" height="8" fill="#1a73c8"/><rect x="7" y="13" width="7" height="6" fill="#2b88d8"/>
<path d="M21.5 12V20" stroke="#292929" stroke-width="1" shape-rendering="crispEdges"/>
<path d="M13.6 16H1.8M7.4 10.4L1.6 16L7.4 21.6" fill="none" stroke="#3a96dd" stroke-width="1.3" stroke-linecap="round" stroke-linejoin="round"/></svg>
<span class="t" style="left:1385.40px;top:123.00px;font-size:12px;letter-spacing:-0.263px;">Insert</span>
<svg class="b" style="left:0;top:0" width="1517" height="230" viewBox="0 0 1517 230"><path d="M1397.00 143.60L1399.50 146.00L1402.00 143.60" fill="none" stroke="#ececec" stroke-width="1.6" stroke-linecap="round" stroke-linejoin="round"/></svg>
<svg class="b" style="left:1427px;top:85px;" width="34" height="28" viewBox="0 0 34 28"><g shape-rendering="crispEdges" fill="none" stroke="#c4c4c4" stroke-width="1"><path d="M3.5 12.5V5.5H30.5V12.5M3.5 19.5V26.5H30.5V19.5M12.5 5.5V12.5M21.5 5.5V12.5M12.5 19.5V26.5M21.5 19.5V26.5M3.5 12.5H7.5M3.5 19.5H7.5"/></g>
<path d="M7 12H20L24 16L20 20H7Z" fill="#1a73c8"/><path d="M15.5 12V20" stroke="#292929" stroke-width="1" shape-rendering="crispEdges"/>
<path d="M21.2 11.2L32 21.8M32 11.2L21.2 21.8" stroke="#e05a5a" stroke-width="1.3" stroke-linecap="round"/></svg>
<span class="t" style="left:1427.70px;top:123.00px;font-size:12px;letter-spacing:-0.497px;">Delete</span>
<svg class="b" style="left:0;top:0" width="1517" height="230" viewBox="0 0 1517 230"><path d="M1441.10 143.60L1443.60 146.00L1446.10 143.60" fill="none" stroke="#ececec" stroke-width="1.6" stroke-linecap="round" stroke-linejoin="round"/></svg>
<svg class="b" style="left:1471px;top:84px;" width="34" height="29" viewBox="0 0 34 29"><path d="M9.5 2.5H25.5M9.5 0.8V4.2M25.5 0.8V4.2" stroke="#3a96dd" stroke-width="1" fill="none" shape-rendering="crispEdges"/>
<g shape-rendering="crispEdges" fill="none" stroke="#c4c4c4" stroke-width="1"><rect x="3.5" y="6.5" width="27" height="21"/>
<path d="M3.5 13.5H30.5M3.5 20.5H30.5M10.5 6.5V27.5M23.5 6.5V27.5"/></g>
<rect x="11" y="14" width="12" height="6" fill="#1a73c8"/></svg>
<span class="t" style="left:1469.40px;top:122.00px;font-size:12px;letter-spacing:-0.083px;">Format</span>
<svg class="b" style="left:0;top:0" width="1517" height="230" viewBox="0 0 1517 230"><path d="M1485.00 142.60L1487.50 145.00L1490.00 142.60" fill="none" stroke="#ececec" stroke-width="1.6" stroke-linecap="round" stroke-linejoin="round"/></svg>
<span class="t" style="left:1432.40px;top:162.00px;font-size:12px;transform:scaleX(0.8736);transform-origin:0 0;">Cells</span>
<div class="b" style="left:-6px;top:186px;width:102.5px;height:26px;background:#292929;border:1px solid #5c5c5c;box-sizing:border-box;border-radius:4px;"></div>
<span class="t" style="left:2.80px;top:193.00px;font-size:13.6px;transform:scaleX(0.8553);transform-origin:0 0;">F385</span>
<svg class="b" style="left:0;top:0" width="1517" height="230" viewBox="0 0 1517 230"><path d="M81.10 198.10L85.40 202.50L89.70 198.10" fill="none" stroke="#e0e0e0" stroke-width="1.3" stroke-linecap="round" stroke-linejoin="round"/></svg>
<div class="b" style="left:105.6px;top:194px;width:2.2px;height:2.2px;background:#e6e6e6;border-radius:0.6px;"></div>
<div class="b" style="left:105.6px;top:198px;width:2.2px;height:2.2px;background:#e6e6e6;border-radius:0.6px;"></div>
<div class="b" style="left:105.6px;top:202px;width:2.2px;height:2.2px;background:#e6e6e6;border-radius:0.6px;"></div>
<div class="b" style="left:117px;top:186px;width:86px;height:26px;background:#292929;border:1px solid #5c5c5c;box-sizing:border-box;border-radius:4px;"></div>
<svg class="b" style="left:123px;top:192px;" width="14" height="14" viewBox="0 0 14 14"><path d="M1.6 1.6L11.6 12M11.6 1.6L1.6 12" stroke="#6e6e6e" stroke-width="1.2" stroke-linecap="round"/></svg>
<svg class="b" style="left:145px;top:192px;" width="17" height="14" viewBox="0 0 17 14"><path d="M1.4 7.6L5.8 12L15.4 1.8" fill="none" stroke="#6e6e6e" stroke-width="1.2" stroke-linecap="round" stroke-linejoin="round"/></svg>
<span class="t" style="left:171.80px;top:190.00px;font-size:16.5px;font-weight:700;font-style:italic;color:#d4d4d4;font-family:'Liberation Serif';">f</span>
<span class="t" style="left:178.20px;top:194.00px;font-size:12.5px;font-weight:700;font-style:italic;color:#d4d4d4;font-family:'Liberation Serif';">x</span>
<svg class="b" style="left:0;top:0" width="1517" height="230" viewBox="0 0 1517 230"><path d="M190.90 197.50L195.20 201.90L199.50 197.50" fill="none" stroke="#c8c8c8" stroke-width="1.2" stroke-linecap="round" stroke-linejoin="round"/></svg>
<div class="b" style="left:207px;top:186px;width:1330px;height:26px;background:#292929;border:1px solid #5c5c5c;box-sizing:border-box;border-radius:4px;"></div>
<span class="t" style="left:218.50px;top:193.00px;font-size:13.2px;letter-spacing:-0.246px;">1100 US-98 Unit A103,</span>
<div class="b" style="left:0px;top:219px;width:1517px;height:12px;background:#0a0a0a;"></div>
<div class="b" style="left:0px;top:231px;width:1517px;height:1px;background:#9a9a9a;"></div>
<div class="b" style="left:10px;top:219px;width:131px;height:12px;background:#0e6232;"></div>
<div class="b" style="left:953px;top:219px;width:288px;height:11px;background:#666666;"></div>
<div class="b" style="left:953px;top:230px;width:288px;height:2px;background:#1f7a45;"></div>
<div class="b" style="left:9px;top:219px;width:1px;height:12px;background:#8a8a8a;"></div>
<div class="b" style="left:141px;top:219px;width:1px;height:12px;background:#8a8a8a;"></div>
<div class="b" style="left:369px;top:219px;width:1px;height:12px;background:#8a8a8a;"></div>
<div class="b" style="left:525px;top:219px;width:1px;height:12px;background:#8a8a8a;"></div>
<div class="b" style="left:804px;top:219px;width:1px;height:12px;background:#8a8a8a;"></div>
<div class="b" style="left:952px;top:219px;width:1px;height:12px;background:#8a8a8a;"></div>
<div class="b" style="left:1241px;top:219px;width:1px;height:12px;background:#8a8a8a;"></div>
<div class="b" style="left:1396px;top:219px;width:1px;height:12px;background:#8a8a8a;"></div>
<div class="b" style="left:1515px;top:219px;width:1px;height:12px;background:#8a8a8a;"></div>
<svg class="b" style="left:0px;top:219px;" width="9" height="12" viewBox="0 0 9 12"><path d="M7 3.6V9H1.2Z" fill="#6a6a6a"/></svg>
<div class="b" style="left:0px;top:232px;width:9px;height:733px;background:#0a0a0a;"></div>
<div class="b" style="left:9px;top:232px;width:1px;height:733px;background:#8a8a8a;"></div>
<div class="b" style="left:0px;top:251px;width:9px;height:1px;background:#7a7a7a;"></div>
<div class="b" style="left:0px;top:280px;width:9px;height:1px;background:#7a7a7a;"></div>
<div class="b" style="left:0px;top:309px;width:9px;height:1px;background:#7a7a7a;"></div>
<div class="b" style="left:0px;top:338px;width:9px;height:1px;background:#7a7a7a;"></div>
<div class="b" style="left:0px;top:367px;width:9px;height:1px;background:#7a7a7a;"></div>
<div class="b" style="left:0px;top:382px;width:9px;height:1px;background:#7a7a7a;"></div>
<div class="b" style="left:0px;top:397px;width:9px;height:1px;background:#7a7a7a;"></div>
<div class="b" style="left:0px;top:441px;width:9px;height:1px;background:#7a7a7a;"></div>
<div class="b" style="left:0px;top:470px;width:9px;height:1px;background:#7a7a7a;"></div>
<div class="b" style="left:0px;top:499px;width:9px;height:1px;background:#7a7a7a;"></div>
<div class="b" style="left:0px;top:558px;width:9px;height:1px;background:#7a7a7a;"></div>
<div class="b" style="left:0px;top:617px;width:9px;height:1px;background:#7a7a7a;"></div>
<div class="b" style="left:0px;top:661px;width:9px;height:1px;background:#7a7a7a;"></div>
<div class="b" style="left:0px;top:705px;width:9px;height:1px;background:#7a7a7a;"></div>
<div class="b" style="left:0px;top:734px;width:9px;height:1px;background:#7a7a7a;"></div>
<div class="b" style="left:0px;top:778px;width:9px;height:1px;background:#7a7a7a;"></div>
<div class="b" style="left:0px;top:807px;width:9px;height:1px;background:#7a7a7a;"></div>
<div class="b" style="left:0px;top:851px;width:9px;height:1px;background:#7a7a7a;"></div>
<div class="b" style="left:0px;top:866px;width:9px;height:1px;background:#7a7a7a;"></div>
<div class="b" style="left:0px;top:881px;width:9px;height:1px;background:#7a7a7a;"></div>
<div class="b" style="left:0px;top:896px;width:9px;height:1px;background:#7a7a7a;"></div>
<div class="b" style="left:0px;top:911px;width:9px;height:1px;background:#7a7a7a;"></div>
<div class="b" style="left:0px;top:926px;width:9px;height:1px;background:#7a7a7a;"></div>
<div class="b" style="left:0px;top:941px;width:9px;height:1px;background:#7a7a7a;"></div>
<div class="b" style="left:0px;top:956px;width:9px;height:1px;background:#7a7a7a;"></div>
<span class="t" style="left:72.60px;top:220.00px;font-size:10.8px;color:#dcdcdc;">A</span>
<span class="t" style="left:252.40px;top:220.00px;font-size:10.8px;color:#dcdcdc;">B</span>
<span class="t" style="left:444.10px;top:220.00px;font-size:10.8px;color:#dcdcdc;">C</span>
<span class="t" style="left:661.70px;top:220.00px;font-size:10.8px;color:#dcdcdc;">D</span>
<span class="t" style="left:875.30px;top:220.00px;font-size:10.8px;color:#dcdcdc;">E</span>
<span class="t" style="left:1093.30px;top:220.00px;font-size:10.8px;color:#ffffff;">F</span>
<span class="t" style="left:1315.30px;top:220.00px;font-size:10.8px;color:#dcdcdc;">G</span>
<span class="t" style="left:1452.80px;top:220.00px;font-size:10.8px;color:#dcdcdc;">H</span>
<div class="b" style="left:10px;top:232px;width:1505px;height:19px;background:#119cd8;"></div>
<div class="b" style="left:1516px;top:232px;width:1px;height:19px;background:#ffffff;"></div>
<div class="b" style="left:10px;top:252px;width:1507px;height:713px;background:#ffffff;"></div>
<div class="b" style="left:10px;top:251px;width:1506px;height:1px;background:#000;"></div>
<div class="b" style="left:10px;top:280px;width:1506px;height:1px;background:#000;"></div>
<div class="b" style="left:10px;top:309px;width:1506px;height:1px;background:#000;"></div>
<div class="b" style="left:10px;top:338px;width:1506px;height:1px;background:#000;"></div>
<div class="b" style="left:10px;top:367px;width:1506px;height:1px;background:#000;"></div>
<div class="b" style="left:10px;top:382px;width:1506px;height:1px;background:#000;"></div>
<div class="b" style="left:10px;top:397px;width:1506px;height:1px;background:#000;"></div>
<div class="b" style="left:10px;top:441px;width:1506px;height:1px;background:#000;"></div>
<div class="b" style="left:10px;top:470px;width:1506px;height:1px;background:#000;"></div>
<div class="b" style="left:10px;top:499px;width:1506px;height:1px;background:#000;"></div>
<div class="b" style="left:10px;top:558px;width:1506px;height:1px;background:#000;"></div>
<div class="b" style="left:10px;top:617px;width:1506px;height:1px;background:#000;"></div>
<div class="b" style="left:10px;top:661px;width:1506px;height:1px;background:#000;"></div>
<div class="b" style="left:10px;top:705px;width:1506px;height:1px;background:#000;"></div>
<div class="b" style="left:10px;top:734px;width:1506px;height:1px;background:#000;"></div>
<div class="b" style="left:10px;top:778px;width:1506px;height:1px;background:#000;"></div>
<div class="b" style="left:10px;top:807px;width:1506px;height:1px;background:#000;"></div>
<div class="b" style="left:10px;top:851px;width:1506px;height:1px;background:#000;"></div>
<div class="b" style="left:10px;top:866px;width:1506px;height:1px;background:#000;"></div>
<div class="b" style="left:10px;top:881px;width:1506px;height:1px;background:#000;"></div>
<div class="b" style="left:10px;top:896px;width:1506px;height:1px;background:#000;"></div>
<div class="b" style="left:10px;top:911px;width:1506px;height:1px;background:#000;"></div>
<div class="b" style="left:10px;top:926px;width:1506px;height:1px;background:#000;"></div>
<div class="b" style="left:10px;top:941px;width:1506px;height:1px;background:#000;"></div>
<div class="b" style="left:10px;top:956px;width:1506px;height:1px;background:#000;"></div>
<div class="b" style="left:141px;top:232px;width:1px;height:733px;background:#000;"></div>
<div class="b" style="left:369px;top:232px;width:1px;height:733px;background:#000;"></div>
<div class="b" style="left:525px;top:232px;width:1px;height:733px;background:#000;"></div>
<div class="b" style="left:804px;top:232px;width:1px;height:733px;background:#000;"></div>
<div class="b" style="left:952px;top:232px;width:1px;height:733px;background:#000;"></div>
<div class="b" style="left:1241px;top:232px;width:1px;height:733px;background:#000;"></div>
<div class="b" style="left:1396px;top:232px;width:1px;height:733px;background:#000;"></div>
<div class="b" style="left:1515px;top:232px;width:1px;height:733px;background:#000;"></div>
<div class="b" style="left:124px;top:233px;width:17px;height:17px;box-sizing:border-box;border:1px solid #a8a8a8;background:linear-gradient(#ffffff 30%,#eef0f4 100%);"></div>
<svg class="b" style="left:128.4px;top:239.6px;" width="9" height="6" viewBox="0 0 9 6"><path d="M0.6 0.6H7.6L4.1 4.6Z" fill="#6a6a6a"/></svg>
<div class="b" style="left:352px;top:233px;width:17px;height:17px;box-sizing:border-box;border:1px solid #a8a8a8;background:linear-gradient(#ffffff 30%,#eef0f4 100%);"></div>
<svg class="b" style="left:356.4px;top:239.6px;" width="9" height="6" viewBox="0 0 9 6"><path d="M0.6 0.6H7.6L4.1 4.6Z" fill="#6a6a6a"/></svg>
<div class="b" style="left:508px;top:233px;width:17px;height:17px;box-sizing:border-box;border:1px solid #a8a8a8;background:linear-gradient(#ffffff 30%,#eef0f4 100%);"></div>
<svg class="b" style="left:512.4px;top:239.6px;" width="9" height="6" viewBox="0 0 9 6"><path d="M0.6 0.6H7.6L4.1 4.6Z" fill="#6a6a6a"/></svg>
<div class="b" style="left:787px;top:233px;width:17px;height:17px;box-sizing:border-box;border:1px solid #a8a8a8;background:linear-gradient(#ffffff 30%,#eef0f4 100%);"></div>
<svg class="b" style="left:791.4px;top:239.6px;" width="9" height="6" viewBox="0 0 9 6"><path d="M0.6 0.6H7.6L4.1 4.6Z" fill="#6a6a6a"/></svg>
<div class="b" style="left:935px;top:233px;width:17px;height:17px;box-sizing:border-box;border:1px solid #a8a8a8;background:linear-gradient(#ffffff 30%,#eef0f4 100%);"></div>
<svg class="b" style="left:939.4px;top:239.6px;" width="9" height="6" viewBox="0 0 9 6"><path d="M0.6 0.6H7.6L4.1 4.6Z" fill="#6a6a6a"/></svg>
<div class="b" style="left:1224px;top:233px;width:17px;height:17px;box-sizing:border-box;border:1px solid #a8a8a8;background:linear-gradient(#ffffff 30%,#eef0f4 100%);"></div>
<svg class="b" style="left:1228.4px;top:239.6px;" width="9" height="6" viewBox="0 0 9 6"><path d="M0.6 0.6H7.6L4.1 4.6Z" fill="#6a6a6a"/></svg>
<div class="b" style="left:1379px;top:233px;width:17px;height:17px;box-sizing:border-box;border:1px solid #a8a8a8;background:linear-gradient(#ffffff 30%,#eef0f4 100%);"></div>
<svg class="b" style="left:1383.4px;top:239.6px;" width="9" height="6" viewBox="0 0 9 6"><path d="M0.6 0.6H7.6L4.1 4.6Z" fill="#6a6a6a"/></svg>
<div class="b" style="left:1498px;top:233px;width:17px;height:17px;box-sizing:border-box;border:1px solid #a8a8a8;background:linear-gradient(#ffffff 30%,#eef0f4 100%);"></div>
<svg class="b" style="left:1502.4px;top:239.6px;" width="9" height="6" viewBox="0 0 9 6"><path d="M0.6 0.6H7.6L4.1 4.6Z" fill="#6a6a6a"/></svg>
<span class="t" style="left:28.20px;top:237.00px;font-size:12.8px;font-weight:700;letter-spacing:0.057px;">Date Contacted</span>
<span class="t" style="left:243.90px;top:237.00px;font-size:12.8px;font-weight:700;letter-spacing:-0.129px;">City</span>
<span class="t" style="left:421.10px;top:237.00px;font-size:12.8px;font-weight:700;letter-spacing:0.328px;">Platform</span>
<span class="t" style="left:526.20px;top:234.00px;font-size:10.2px;font-weight:700;color:#0a4562;letter-spacing:0.731px;-webkit-text-stroke:0.25px #0a4562;">ent.com/fl/fort-walton-beach/1330-miracle-strip</span>
<span class="t" style="left:832.60px;top:237.00px;font-size:12.8px;font-weight:700;">Landlord Name</span>
<span class="t" style="left:1044.30px;top:237.00px;font-size:12.8px;font-weight:700;letter-spacing:-0.015px;">Property Address</span>
<span class="t" style="left:1271.60px;top:237.00px;font-size:12.8px;font-weight:700;letter-spacing:-0.077px;">Landlord Phone</span>
<div class="c" style="left:1397px;top:232px;width:101px;height:19px;">
<span class="t" style="left:1.20px;top:5.00px;font-size:12.8px;font-weight:700;letter-spacing:-0.101px;">Landlord Respon</span>
</div>
<span class="t" style="left:32.10px;top:255.00px;font-size:9.5px;font-weight:700;color:#000000;letter-spacing:0.387px;-webkit-text-stroke:0.2px #000;">September 4,2025</span>
<span class="t" style="left:192.20px;top:255.00px;font-size:9.5px;font-weight:700;color:#000000;letter-spacing:-0.115px;-webkit-text-stroke:0.2px #000;">Bluffton, SC (South Carolina)</span>
<span class="t" style="left:411.15px;top:255.00px;font-size:9.5px;font-weight:700;color:#000000;letter-spacing:0.334px;-webkit-text-stroke:0.2px #000;">Apartment.com</span>
<span class="t" style="left:526.30px;top:263.00px;font-size:9.2px;font-weight:700;color:#1d4477;letter-spacing:0.426px;">ps://www.apartments.com/29-edgewater-bluffton-sc/f53my</span>
<div class="b" style="left:526px;top:271px;width:278px;height:1px;background:#1d4477;"></div>
<span class="t" style="left:868.85px;top:262.00px;font-size:9.5px;font-weight:700;color:#000000;letter-spacing:1.263px;-webkit-text-stroke:0.2px #000;">N/A</span>
<span class="t" style="left:1013.05px;top:255.00px;font-size:9.5px;font-weight:700;color:#000000;letter-spacing:0.072px;-webkit-text-stroke:0.2px #000;">29 Edgewater Cir, Bluffton, SC 29910</span>
<span class="t" style="left:1283.60px;top:269.00px;font-size:9.5px;font-weight:700;color:#000000;letter-spacing:0.479px;-webkit-text-stroke:0.2px #000;">(843) 686-0778</span>
<span class="t" style="right:1514.5px;top:267px;font-size:10.5px;color:#cfcfcf;">82</span>
<span class="t" style="left:32.10px;top:284.00px;font-size:9.5px;font-weight:700;color:#000000;letter-spacing:0.387px;-webkit-text-stroke:0.2px #000;">September 4,2025</span>
<span class="t" style="left:192.20px;top:284.00px;font-size:9.5px;font-weight:700;color:#000000;letter-spacing:-0.115px;-webkit-text-stroke:0.2px #000;">Bluffton, SC (South Carolina)</span>
<span class="t" style="left:411.15px;top:284.00px;font-size:9.5px;font-weight:700;color:#000000;letter-spacing:0.334px;-webkit-text-stroke:0.2px #000;">Apartment.com</span>
<span class="t" style="left:526.30px;top:292.00px;font-size:9.2px;font-weight:700;color:#1d4477;letter-spacing:0.427px;">//www.apartments.com/argent-cottages-hardeeville-sc/3kg</span>
<div class="b" style="left:526px;top:300px;width:278px;height:1px;background:#1d4477;"></div>
<span class="t" style="left:868.85px;top:291.00px;font-size:9.5px;font-weight:700;color:#000000;letter-spacing:1.263px;-webkit-text-stroke:0.2px #000;">N/A</span>
<span class="t" style="left:1001.40px;top:284.00px;font-size:9.5px;font-weight:700;color:#000000;letter-spacing:0.133px;-webkit-text-stroke:0.2px #000;">103 Sandlapper Dr, Hardeeville, SC 29927</span>
<span class="t" style="left:1283.60px;top:298.00px;font-size:9.5px;font-weight:700;color:#000000;letter-spacing:0.479px;-webkit-text-stroke:0.2px #000;">(843) 417-9639</span>
<span class="t" style="right:1514.5px;top:296px;font-size:10.5px;color:#cfcfcf;">83</span>
<span class="t" style="left:32.10px;top:313.00px;font-size:9.5px;font-weight:700;color:#000000;letter-spacing:0.387px;-webkit-text-stroke:0.2px #000;">September 4,2025</span>
<span class="t" style="left:192.20px;top:313.00px;font-size:9.5px;font-weight:700;color:#000000;letter-spacing:-0.115px;-webkit-text-stroke:0.2px #000;">Bluffton, SC (South Carolina)</span>
<span class="t" style="left:411.15px;top:313.00px;font-size:9.5px;font-weight:700;color:#000000;letter-spacing:0.334px;-webkit-text-stroke:0.2px #000;">Apartment.com</span>
<span class="t" style="left:526.30px;top:321.00px;font-size:9.2px;font-weight:700;color:#1d4477;letter-spacing:0.343px;">s://www.apartments.com/56-plumgrass-st-bluffton-sc/13gm</span>
<div class="b" style="left:526px;top:329px;width:278px;height:1px;background:#1d4477;"></div>
<span class="t" style="left:868.85px;top:320.00px;font-size:9.5px;font-weight:700;color:#000000;letter-spacing:1.263px;-webkit-text-stroke:0.2px #000;">N/A</span>
<span class="t" style="left:1060.40px;top:313.00px;font-size:9.5px;font-weight:700;color:#000000;letter-spacing:-0.198px;-webkit-text-stroke:0.2px #000;">56 Plumgrass St,</span>
<span class="t" style="left:1054.50px;top:328.00px;font-size:9.5px;font-weight:700;color:#000000;letter-spacing:0.086px;-webkit-text-stroke:0.2px #000;">Bluffton, SC 29910</span>
<span class="t" style="left:1283.60px;top:313.00px;font-size:9.5px;font-weight:700;color:#000000;letter-spacing:0.479px;-webkit-text-stroke:0.2px #000;">(854) 212-8547</span>
<span class="t" style="right:1514.5px;top:325px;font-size:10.5px;color:#cfcfcf;">84</span>
<span class="t" style="left:32.10px;top:342.00px;font-size:9.5px;font-weight:700;color:#000000;letter-spacing:0.387px;-webkit-text-stroke:0.2px #000;">September 4,2025</span>
<span class="t" style="left:192.20px;top:342.00px;font-size:9.5px;font-weight:700;color:#000000;letter-spacing:-0.115px;-webkit-text-stroke:0.2px #000;">Bluffton, SC (South Carolina)</span>
<span class="t" style="left:411.15px;top:342.00px;font-size:9.5px;font-weight:700;color:#000000;letter-spacing:0.334px;-webkit-text-stroke:0.2px #000;">Apartment.com</span>
<span class="t" style="left:526.30px;top:350.00px;font-size:9.2px;font-weight:700;color:#1d4477;letter-spacing:0.285px;">rtments.com/oldfield-mews-apartments-and-townhomes-blu</span>
<div class="b" style="left:526px;top:358px;width:278px;height:1px;background:#1d4477;"></div>
<span class="t" style="left:868.85px;top:349.00px;font-size:9.5px;font-weight:700;color:#000000;letter-spacing:1.263px;-webkit-text-stroke:0.2px #000;">N/A</span>
<span class="t" style="left:1010.80px;top:342.00px;font-size:9.5px;font-weight:700;color:#000000;letter-spacing:0.071px;-webkit-text-stroke:0.2px #000;">116 Old Towne Rd, Bluffton, SC 29909</span>
<span class="t" style="left:1283.60px;top:356.00px;font-size:9.5px;font-weight:700;color:#000000;letter-spacing:0.479px;-webkit-text-stroke:0.2px #000;">(843) 948-2472</span>
<span class="t" style="right:1514.5px;top:354px;font-size:10.5px;color:#cfcfcf;">85</span>
<span class="t" style="left:32.10px;top:371.00px;font-size:9.5px;font-weight:700;color:#000000;letter-spacing:0.387px;-webkit-text-stroke:0.2px #000;">September 4,2025</span>
<span class="t" style="left:192.20px;top:371.00px;font-size:9.5px;font-weight:700;color:#000000;letter-spacing:-0.115px;-webkit-text-stroke:0.2px #000;">Bluffton, SC (South Carolina)</span>
<span class="t" style="left:425.75px;top:371.00px;font-size:9.5px;font-weight:700;color:#000000;letter-spacing:0.172px;-webkit-text-stroke:0.2px #000;">Rent.com</span>
<span class="t" style="left:526.30px;top:372.00px;font-size:9.2px;font-weight:700;color:#1d4477;letter-spacing:0.343px;">w.rent.com/apartment/residences-at-old-carolina-bluffton-s</span>
<div class="b" style="left:526px;top:380px;width:278px;height:1px;background:#1d4477;"></div>
<span class="t" style="left:868.85px;top:371.00px;font-size:9.5px;font-weight:700;color:#000000;letter-spacing:1.263px;-webkit-text-stroke:0.2px #000;">N/A</span>
<span class="t" style="left:1012.85px;top:371.00px;font-size:9.5px;font-weight:700;color:#000000;letter-spacing:-0.065px;-webkit-text-stroke:0.2px #000;">66 Buck Island Rd, Bluffton, SC 29910</span>
<span class="t" style="left:1283.60px;top:371.00px;font-size:9.5px;font-weight:700;color:#000000;letter-spacing:0.479px;-webkit-text-stroke:0.2px #000;">(864) 823-0157</span>
<span class="t" style="right:1514.5px;top:369px;font-size:10.5px;color:#cfcfcf;">86</span>
<span class="t" style="left:32.10px;top:386.00px;font-size:9.5px;font-weight:700;color:#000000;letter-spacing:0.387px;-webkit-text-stroke:0.2px #000;">September 4,2025</span>
<span class="t" style="left:192.20px;top:386.00px;font-size:9.5px;font-weight:700;color:#000000;letter-spacing:-0.115px;-webkit-text-stroke:0.2px #000;">Bluffton, SC (South Carolina)</span>
<span class="t" style="left:425.75px;top:386.00px;font-size:9.5px;font-weight:700;color:#000000;letter-spacing:0.172px;-webkit-text-stroke:0.2px #000;">Rent.com</span>
<span class="t" style="left:526.30px;top:387.00px;font-size:9.2px;font-weight:700;color:#1d4477;letter-spacing:0.385px;">/www.rent.com/apartment/new-river-forest-bluffton-sc-lc62</span>
<div class="b" style="left:526px;top:395px;width:278px;height:1px;background:#1d4477;"></div>
<span class="t" style="left:868.85px;top:386.00px;font-size:9.5px;font-weight:700;color:#000000;letter-spacing:1.263px;-webkit-text-stroke:0.2px #000;">N/A</span>
<span class="t" style="left:1024.10px;top:386.00px;font-size:9.5px;font-weight:700;color:#000000;letter-spacing:-0.035px;-webkit-text-stroke:0.2px #000;">36 Kelsey Ln, Bluffton, SC 29910</span>
<span class="t" style="left:1283.60px;top:386.00px;font-size:9.5px;font-weight:700;color:#000000;letter-spacing:0.479px;-webkit-text-stroke:0.2px #000;">(864) 813-4775</span>
<span class="t" style="right:1514.5px;top:384px;font-size:10.5px;color:#cfcfcf;">87</span>
<span class="t" style="left:32.10px;top:401.00px;font-size:9.5px;font-weight:700;color:#000000;letter-spacing:0.387px;-webkit-text-stroke:0.2px #000;">September 4,2025</span>
<span class="t" style="left:192.20px;top:401.00px;font-size:9.5px;font-weight:700;color:#000000;letter-spacing:-0.115px;-webkit-text-stroke:0.2px #000;">Bluffton, SC (South Carolina)</span>
<span class="t" style="left:425.75px;top:401.00px;font-size:9.5px;font-weight:700;color:#000000;letter-spacing:0.172px;-webkit-text-stroke:0.2px #000;">Rent.com</span>
<span class="t" style="left:526.30px;top:416.00px;font-size:9.2px;font-weight:700;color:#1d4477;letter-spacing:0.485px;">://www.rent.com/r/125-lake-linden-dr-bluffton-sc-lv243767</span>
<div class="b" style="left:526px;top:425px;width:278px;height:1px;background:#1d4477;"></div>
<span class="t" style="left:868.85px;top:415.00px;font-size:9.5px;font-weight:700;color:#000000;letter-spacing:1.263px;-webkit-text-stroke:0.2px #000;">N/A</span>
<span class="t" style="left:1053.20px;top:401.00px;font-size:9.5px;font-weight:700;color:#000000;letter-spacing:0.051px;-webkit-text-stroke:0.2px #000;">125 Lake Linden Dr</span>
<span class="t" style="left:1054.50px;top:416.00px;font-size:9.5px;font-weight:700;color:#000000;letter-spacing:0.086px;-webkit-text-stroke:0.2px #000;">Bluffton, SC 29910</span>
<span class="t" style="left:1072.00px;top:431.00px;font-size:9.5px;font-weight:700;color:#000000;letter-spacing:0.341px;-webkit-text-stroke:0.2px #000;">Downtown</span>
<span class="t" style="left:1283.60px;top:401.00px;font-size:9.5px;font-weight:700;color:#000000;letter-spacing:0.479px;-webkit-text-stroke:0.2px #000;">(843) 706-7368</span>
<span class="t" style="right:1514.5px;top:428px;font-size:10.5px;color:#cfcfcf;">88</span>
<span class="t" style="left:32.10px;top:445.00px;font-size:9.5px;font-weight:700;color:#000000;letter-spacing:0.387px;-webkit-text-stroke:0.2px #000;">September 4,2025</span>
<span class="t" style="left:192.20px;top:445.00px;font-size:9.5px;font-weight:700;color:#000000;letter-spacing:-0.115px;-webkit-text-stroke:0.2px #000;">Bluffton, SC (South Carolina)</span>
<span class="t" style="left:425.75px;top:445.00px;font-size:9.5px;font-weight:700;color:#000000;letter-spacing:0.172px;-webkit-text-stroke:0.2px #000;">Rent.com</span>
<span class="t" style="left:526.30px;top:453.00px;font-size:9.2px;font-weight:700;color:#1d4477;letter-spacing:0.503px;">tps://www.rent.com/r/11-village-dr-bluffton-sc-lv23951898</span>
<div class="b" style="left:526px;top:461px;width:278px;height:1px;background:#1d4477;"></div>
<span class="t" style="left:868.85px;top:452.00px;font-size:9.5px;font-weight:700;color:#000000;letter-spacing:1.263px;-webkit-text-stroke:0.2px #000;">N/A</span>
<span class="t" style="left:1068.20px;top:445.00px;font-size:9.5px;font-weight:700;color:#000000;letter-spacing:0.138px;-webkit-text-stroke:0.2px #000;">11 Village Dr</span>
<span class="t" style="left:1054.50px;top:460.00px;font-size:9.5px;font-weight:700;color:#000000;letter-spacing:0.086px;-webkit-text-stroke:0.2px #000;">Bluffton, SC 29910</span>
<span class="t" style="left:1283.60px;top:445.00px;font-size:9.5px;font-weight:700;color:#000000;letter-spacing:0.479px;-webkit-text-stroke:0.2px #000;">(843) 706-7368</span>
<span class="t" style="right:1514.5px;top:457px;font-size:10.5px;color:#cfcfcf;">89</span>
<span class="t" style="left:32.10px;top:474.00px;font-size:9.5px;font-weight:700;color:#000000;letter-spacing:0.387px;-webkit-text-stroke:0.2px #000;">September 4,2025</span>
<span class="t" style="left:192.20px;top:474.00px;font-size:9.5px;font-weight:700;color:#000000;letter-spacing:-0.115px;-webkit-text-stroke:0.2px #000;">Bluffton, SC (South Carolina)</span>
<span class="t" style="left:425.75px;top:474.00px;font-size:9.5px;font-weight:700;color:#000000;letter-spacing:0.172px;-webkit-text-stroke:0.2px #000;">Rent.com</span>
<span class="t" style="left:526.30px;top:482.00px;font-size:9.2px;font-weight:700;color:#1d4477;letter-spacing:0.429px;">ps://www.rent.com/r/8-buckhorn-st-bluffton-sc-lv23894471</span>
<div class="b" style="left:526px;top:490px;width:278px;height:1px;background:#1d4477;"></div>
<span class="t" style="left:868.85px;top:481.00px;font-size:9.5px;font-weight:700;color:#000000;letter-spacing:1.263px;-webkit-text-stroke:0.2px #000;">N/A</span>
<span class="t" style="left:1065.70px;top:474.00px;font-size:9.5px;font-weight:700;color:#000000;letter-spacing:-0.117px;-webkit-text-stroke:0.2px #000;">8 Buckhorn St</span>
<span class="t" style="left:1054.50px;top:489.00px;font-size:9.5px;font-weight:700;color:#000000;letter-spacing:0.086px;-webkit-text-stroke:0.2px #000;">Bluffton, SC 29910</span>
<span class="t" style="left:1283.60px;top:488.00px;font-size:9.5px;font-weight:700;color:#000000;letter-spacing:0.479px;-webkit-text-stroke:0.2px #000;">(888) 344-4246</span>
<span class="t" style="right:1514.5px;top:486px;font-size:10.5px;color:#cfcfcf;">90</span>
<span class="t" style="left:32.10px;top:503.00px;font-size:9.5px;font-weight:700;color:#000000;letter-spacing:0.387px;-webkit-text-stroke:0.2px #000;">September 4,2025</span>
<span class="t" style="left:192.20px;top:503.00px;font-size:9.5px;font-weight:700;color:#000000;letter-spacing:-0.115px;-webkit-text-stroke:0.2px #000;">Bluffton, SC (South Carolina)</span>
<span class="t" style="left:425.75px;top:503.00px;font-size:9.5px;font-weight:700;color:#000000;letter-spacing:0.172px;-webkit-text-stroke:0.2px #000;">Rent.com</span>
<span class="t" style="left:526.30px;top:526.00px;font-size:9.2px;font-weight:700;color:#1d4477;letter-spacing:0.568px;">tps://www.rent.com/r/15-torrey-ln-bluffton-sc-lv24058379</span>
<div class="b" style="left:526px;top:534px;width:278px;height:1px;background:#1d4477;"></div>
<span class="t" style="left:868.85px;top:525.00px;font-size:9.5px;font-weight:700;color:#000000;letter-spacing:1.263px;-webkit-text-stroke:0.2px #000;">N/A</span>
<span class="t" style="left:1069.00px;top:503.00px;font-size:9.5px;font-weight:700;color:#000000;letter-spacing:0.007px;-webkit-text-stroke:0.2px #000;">15 Torrey Ln</span>
<span class="t" style="left:1054.50px;top:518.00px;font-size:9.5px;font-weight:700;color:#000000;letter-spacing:0.086px;-webkit-text-stroke:0.2px #000;">Bluffton, SC 29910</span>
<span class="t" style="left:1283.60px;top:503.00px;font-size:9.5px;font-weight:700;color:#000000;letter-spacing:0.479px;-webkit-text-stroke:0.2px #000;">(843) 706-2449</span>
<span class="t" style="right:1514.5px;top:545px;font-size:10.5px;color:#cfcfcf;">91</span>
<span class="t" style="left:32.10px;top:562.00px;font-size:9.5px;font-weight:700;color:#000000;letter-spacing:0.387px;-webkit-text-stroke:0.2px #000;">September 4,2025</span>
<span class="t" style="left:192.20px;top:562.00px;font-size:9.5px;font-weight:700;color:#000000;letter-spacing:-0.115px;-webkit-text-stroke:0.2px #000;">Bluffton, SC (South Carolina)</span>
<span class="t" style="left:425.75px;top:562.00px;font-size:9.5px;font-weight:700;color:#000000;letter-spacing:0.172px;-webkit-text-stroke:0.2px #000;">Rent.com</span>
<span class="t" style="left:526.30px;top:585.00px;font-size:9.2px;font-weight:700;color:#1d4477;letter-spacing:0.438px;">s://www.rent.com/r/503-south-square-bluffton-sc-lv233009</span>
<div class="b" style="left:526px;top:593px;width:278px;height:1px;background:#1d4477;"></div>
<span class="t" style="left:868.85px;top:584.00px;font-size:9.5px;font-weight:700;color:#000000;letter-spacing:1.263px;-webkit-text-stroke:0.2px #000;">N/A</span>
<span class="t" style="left:1056.85px;top:562.00px;font-size:9.5px;font-weight:700;color:#000000;letter-spacing:0.030px;-webkit-text-stroke:0.2px #000;">503 South Square</span>
<span class="t" style="left:1054.50px;top:577.00px;font-size:9.5px;font-weight:700;color:#000000;letter-spacing:0.086px;-webkit-text-stroke:0.2px #000;">Bluffton, SC 29910</span>
<span class="t" style="left:1283.60px;top:606.00px;font-size:9.5px;font-weight:700;color:#000000;letter-spacing:0.479px;-webkit-text-stroke:0.2px #000;">(843) 706-7368</span>
<span class="t" style="right:1514.5px;top:604px;font-size:10.5px;color:#cfcfcf;">92</span>
<span class="t" style="left:32.10px;top:621.00px;font-size:9.5px;font-weight:700;color:#000000;letter-spacing:0.387px;-webkit-text-stroke:0.2px #000;">September 4,2025</span>
<span class="t" style="left:192.20px;top:621.00px;font-size:9.5px;font-weight:700;color:#000000;letter-spacing:-0.115px;-webkit-text-stroke:0.2px #000;">Bluffton, SC (South Carolina)</span>
<span class="t" style="left:425.75px;top:621.00px;font-size:9.5px;font-weight:700;color:#000000;letter-spacing:0.172px;-webkit-text-stroke:0.2px #000;">Rent.com</span>
<span class="t" style="left:526.30px;top:636.00px;font-size:9.2px;font-weight:700;color:#1d4477;letter-spacing:0.440px;">s://www.rent.com/r/16-wellington-dr-bluffton-sc-lv2424432</span>
<div class="b" style="left:526px;top:645px;width:278px;height:1px;background:#1d4477;"></div>
<span class="t" style="left:868.85px;top:635.00px;font-size:9.5px;font-weight:700;color:#000000;letter-spacing:1.263px;-webkit-text-stroke:0.2px #000;">N/A</span>
<span class="t" style="left:1057.90px;top:621.00px;font-size:9.5px;font-weight:700;color:#000000;letter-spacing:0.255px;-webkit-text-stroke:0.2px #000;">16 Wellington Dr</span>
<span class="t" style="left:1054.50px;top:636.00px;font-size:9.5px;font-weight:700;color:#000000;letter-spacing:0.086px;-webkit-text-stroke:0.2px #000;">Bluffton, SC 29910</span>
<span class="t" style="left:1283.60px;top:650.00px;font-size:9.5px;font-weight:700;color:#000000;letter-spacing:0.479px;-webkit-text-stroke:0.2px #000;">(843) 287-9443</span>
<span class="t" style="right:1514.5px;top:648px;font-size:10.5px;color:#cfcfcf;">93</span>
<span class="t" style="left:32.10px;top:665.00px;font-size:9.5px;font-weight:700;color:#000000;letter-spacing:0.387px;-webkit-text-stroke:0.2px #000;">September 4,2025</span>
<span class="t" style="left:192.20px;top:665.00px;font-size:9.5px;font-weight:700;color:#000000;letter-spacing:-0.115px;-webkit-text-stroke:0.2px #000;">Bluffton, SC (South Carolina)</span>
<span class="t" style="left:425.75px;top:665.00px;font-size:9.5px;font-weight:700;color:#000000;letter-spacing:0.172px;-webkit-text-stroke:0.2px #000;">Rent.com</span>
<span class="t" style="left:526.30px;top:680.00px;font-size:9.2px;font-weight:700;color:#1d4477;letter-spacing:0.466px;">://www.rent.com/r/14-arbormeade-cir-bluffton-sc-lv226741</span>
<div class="b" style="left:526px;top:689px;width:278px;height:1px;background:#1d4477;"></div>
<span class="t" style="left:868.85px;top:679.00px;font-size:9.5px;font-weight:700;color:#000000;letter-spacing:1.263px;-webkit-text-stroke:0.2px #000;">N/A</span>
<span class="t" style="left:1053.35px;top:665.00px;font-size:9.5px;font-weight:700;color:#000000;letter-spacing:0.190px;-webkit-text-stroke:0.2px #000;">14 Arbormeade Cir</span>
<span class="t" style="left:1054.50px;top:680.00px;font-size:9.5px;font-weight:700;color:#000000;letter-spacing:0.086px;-webkit-text-stroke:0.2px #000;">Bluffton, SC 29910</span>
<span class="t" style="left:1283.60px;top:665.00px;font-size:9.5px;font-weight:700;color:#000000;letter-spacing:0.479px;-webkit-text-stroke:0.2px #000;">(843) 376-4453</span>
<span class="t" style="right:1514.5px;top:692px;font-size:10.5px;color:#cfcfcf;">94</span>
<span class="t" style="left:32.10px;top:709.00px;font-size:9.5px;font-weight:700;color:#000000;letter-spacing:0.387px;-webkit-text-stroke:0.2px #000;">September 4,2025</span>
<span class="t" style="left:192.20px;top:709.00px;font-size:9.5px;font-weight:700;color:#000000;letter-spacing:-0.115px;-webkit-text-stroke:0.2px #000;">Bluffton, SC (South Carolina)</span>
<span class="t" style="left:425.75px;top:709.00px;font-size:9.5px;font-weight:700;color:#000000;letter-spacing:0.172px;-webkit-text-stroke:0.2px #000;">Rent.com</span>
<span class="t" style="left:526.30px;top:717.00px;font-size:9.2px;font-weight:700;color:#1d4477;letter-spacing:0.503px;">tps://www.rent.com/r/443-crane-ct-bluffton-sc-lv24374956</span>
<div class="b" style="left:526px;top:725px;width:278px;height:1px;background:#1d4477;"></div>
<span class="t" style="left:868.85px;top:716.00px;font-size:9.5px;font-weight:700;color:#000000;letter-spacing:1.263px;-webkit-text-stroke:0.2px #000;">N/A</span>
<span class="t" style="left:1067.80px;top:709.00px;font-size:9.5px;font-weight:700;color:#000000;letter-spacing:0.064px;-webkit-text-stroke:0.2px #000;">443 Crane Ct</span>
<span class="t" style="left:1054.50px;top:724.00px;font-size:9.5px;font-weight:700;color:#000000;letter-spacing:0.086px;-webkit-text-stroke:0.2px #000;">Bluffton, SC 29909</span>
<span class="t" style="left:1283.60px;top:709.00px;font-size:9.5px;font-weight:700;color:#000000;letter-spacing:0.479px;-webkit-text-stroke:0.2px #000;">(843) 376-4453</span>
<span class="t" style="right:1514.5px;top:721px;font-size:10.5px;color:#cfcfcf;">95</span>
<span class="t" style="left:32.10px;top:738.00px;font-size:9.5px;font-weight:700;color:#000000;letter-spacing:0.387px;-webkit-text-stroke:0.2px #000;">September 4,2025</span>
<span class="t" style="left:192.20px;top:738.00px;font-size:9.5px;font-weight:700;color:#000000;letter-spacing:-0.115px;-webkit-text-stroke:0.2px #000;">Bluffton, SC (South Carolina)</span>
<span class="t" style="left:425.75px;top:738.00px;font-size:9.5px;font-weight:700;color:#000000;letter-spacing:0.172px;-webkit-text-stroke:0.2px #000;">Rent.com</span>
<span class="t" style="left:526.30px;top:753.00px;font-size:9.2px;font-weight:700;color:#1d4477;letter-spacing:0.421px;">s://www.rent.com/r/436-gardners-cir-bluffton-sc-lv2382219</span>
<div class="b" style="left:526px;top:762px;width:278px;height:1px;background:#1d4477;"></div>
<span class="t" style="left:868.85px;top:752.00px;font-size:9.5px;font-weight:700;color:#000000;letter-spacing:1.263px;-webkit-text-stroke:0.2px #000;">N/A</span>
<span class="t" style="left:1058.80px;top:738.00px;font-size:9.5px;font-weight:700;color:#000000;letter-spacing:0.015px;-webkit-text-stroke:0.2px #000;">436 Gardners Cir</span>
<span class="t" style="left:1054.50px;top:753.00px;font-size:9.5px;font-weight:700;color:#000000;letter-spacing:0.086px;-webkit-text-stroke:0.2px #000;">Bluffton, SC 29910</span>
<span class="t" style="left:1283.60px;top:738.00px;font-size:9.5px;font-weight:700;color:#000000;letter-spacing:0.479px;-webkit-text-stroke:0.2px #000;">(843) 287-9443</span>
<span class="t" style="right:1514.5px;top:765px;font-size:10.5px;color:#cfcfcf;">96</span>
<span class="t" style="left:32.10px;top:782.00px;font-size:9.5px;font-weight:700;color:#000000;letter-spacing:0.387px;-webkit-text-stroke:0.2px #000;">September 4,2025</span>
<span class="t" style="left:192.20px;top:782.00px;font-size:9.5px;font-weight:700;color:#000000;letter-spacing:-0.115px;-webkit-text-stroke:0.2px #000;">Bluffton, SC (South Carolina)</span>
<span class="t" style="left:425.75px;top:782.00px;font-size:9.5px;font-weight:700;color:#000000;letter-spacing:0.172px;-webkit-text-stroke:0.2px #000;">Rent.com</span>
<span class="t" style="left:526.30px;top:790.00px;font-size:9.2px;font-weight:700;color:#1d4477;letter-spacing:0.485px;">ps://www.rent.com/r/18-e-park-loop-bluffton-sc-lv2382219</span>
<div class="b" style="left:526px;top:798px;width:278px;height:1px;background:#1d4477;"></div>
<span class="t" style="left:868.85px;top:789.00px;font-size:9.5px;font-weight:700;color:#000000;letter-spacing:1.263px;-webkit-text-stroke:0.2px #000;">N/A</span>
<span class="t" style="left:1056.85px;top:782.00px;font-size:9.5px;font-weight:700;color:#000000;letter-spacing:0.030px;-webkit-text-stroke:0.2px #000;">503 South Square</span>
<span class="t" style="left:1054.50px;top:797.00px;font-size:9.5px;font-weight:700;color:#000000;letter-spacing:0.086px;-webkit-text-stroke:0.2px #000;">Bluffton, SC 29910</span>
<span class="t" style="left:1283.60px;top:782.00px;font-size:9.5px;font-weight:700;color:#000000;letter-spacing:0.479px;-webkit-text-stroke:0.2px #000;">(843) 287-9443</span>
<span class="t" style="right:1514.5px;top:794px;font-size:10.5px;color:#cfcfcf;">97</span>
<span class="t" style="left:32.10px;top:811.00px;font-size:9.5px;font-weight:700;color:#000000;letter-spacing:0.387px;-webkit-text-stroke:0.2px #000;">September 4,2025</span>
<span class="t" style="left:192.20px;top:811.00px;font-size:9.5px;font-weight:700;color:#000000;letter-spacing:-0.115px;-webkit-text-stroke:0.2px #000;">Bluffton, SC (South Carolina)</span>
<span class="t" style="left:425.75px;top:811.00px;font-size:9.5px;font-weight:700;color:#000000;letter-spacing:0.172px;-webkit-text-stroke:0.2px #000;">Rent.com</span>
<span class="t" style="left:526.30px;top:826.00px;font-size:9.2px;font-weight:700;color:#1d4477;letter-spacing:0.447px;">s://www.rent.com/r/56-plumgrass-st-bluffton-sc-lv2417645</span>
<div class="b" style="left:526px;top:835px;width:278px;height:1px;background:#1d4477;"></div>
<span class="t" style="left:868.85px;top:825.00px;font-size:9.5px;font-weight:700;color:#000000;letter-spacing:1.263px;-webkit-text-stroke:0.2px #000;">N/A</span>
<span class="t" style="left:1061.85px;top:811.00px;font-size:9.5px;font-weight:700;color:#000000;letter-spacing:-0.230px;-webkit-text-stroke:0.2px #000;">56 Plumgrass St</span>
<span class="t" style="left:1054.50px;top:826.00px;font-size:9.5px;font-weight:700;color:#000000;letter-spacing:0.086px;-webkit-text-stroke:0.2px #000;">Bluffton, SC 29910</span>
<span class="t" style="left:1283.60px;top:811.00px;font-size:9.5px;font-weight:700;color:#000000;letter-spacing:0.479px;-webkit-text-stroke:0.2px #000;">(843) 321-0842</span>
<span class="t" style="right:1514.5px;top:838px;font-size:10.5px;color:#cfcfcf;">98</span>
<span class="t" style="left:32.10px;top:855.00px;font-size:9.5px;font-weight:700;color:#000000;letter-spacing:0.387px;-webkit-text-stroke:0.2px #000;">September 4,2025</span>
<span class="t" style="left:192.20px;top:855.00px;font-size:9.5px;font-weight:700;color:#000000;letter-spacing:-0.115px;-webkit-text-stroke:0.2px #000;">Bluffton, SC (South Carolina)</span>
<span class="t" style="left:433.40px;top:855.00px;font-size:9.5px;font-weight:700;color:#000000;letter-spacing:-0.072px;-webkit-text-stroke:0.2px #000;">Redfin</span>
<span class="t" style="left:526.30px;top:856.00px;font-size:9.2px;font-weight:700;color:#1d4477;letter-spacing:0.663px;">ww.redfin.com/SC/Bluffton/11-Village-Dr-29910/home/11</span>
<div class="b" style="left:526px;top:864px;width:278px;height:1px;background:#1d4477;"></div>
<span class="t" style="left:868.85px;top:855.00px;font-size:9.5px;font-weight:700;color:#000000;letter-spacing:1.263px;-webkit-text-stroke:0.2px #000;">N/A</span>
<span class="t" style="left:1023.95px;top:855.00px;font-size:9.5px;font-weight:700;color:#000000;letter-spacing:0.133px;-webkit-text-stroke:0.2px #000;">11 Village Dr, Bluffton, SC29910</span>
<span class="t" style="left:1284.85px;top:855.00px;font-size:9.5px;font-weight:700;color:#000000;letter-spacing:0.531px;-webkit-text-stroke:0.2px #000;">(843)706-7368</span>
<span class="t" style="right:1514.5px;top:853px;font-size:10.5px;color:#cfcfcf;">99</span>
<span class="t" style="left:32.10px;top:870.00px;font-size:9.5px;font-weight:700;color:#000000;letter-spacing:0.387px;-webkit-text-stroke:0.2px #000;">September 4,2025</span>
<span class="t" style="left:192.20px;top:870.00px;font-size:9.5px;font-weight:700;color:#000000;letter-spacing:-0.115px;-webkit-text-stroke:0.2px #000;">Bluffton, SC (South Carolina)</span>
<span class="t" style="left:433.40px;top:870.00px;font-size:9.5px;font-weight:700;color:#000000;letter-spacing:-0.072px;-webkit-text-stroke:0.2px #000;">Redfin</span>
<span class="t" style="left:526.30px;top:871.00px;font-size:9.2px;font-weight:700;color:#1d4477;letter-spacing:0.676px;">ww.redfin.com/SC/Bluffton/15-Torrey-Ln-29910/home/11</span>
<div class="b" style="left:526px;top:879px;width:278px;height:1px;background:#1d4477;"></div>
<span class="t" style="left:868.85px;top:870.00px;font-size:9.5px;font-weight:700;color:#000000;letter-spacing:1.263px;-webkit-text-stroke:0.2px #000;">N/A</span>
<span class="t" style="left:1024.90px;top:870.00px;font-size:9.5px;font-weight:700;color:#000000;letter-spacing:0.057px;-webkit-text-stroke:0.2px #000;">15 Torrey Ln, Bluffton, SC29910</span>
<span class="t" style="left:1284.85px;top:870.00px;font-size:9.5px;font-weight:700;color:#000000;letter-spacing:0.531px;-webkit-text-stroke:0.2px #000;">(843)706-2449</span>
<span class="t" style="right:1512.9px;top:868px;font-size:10.5px;color:#cfcfcf;">100</span>
<span class="t" style="left:32.10px;top:885.00px;font-size:9.5px;font-weight:700;color:#000000;letter-spacing:0.387px;-webkit-text-stroke:0.2px #000;">September 4,2025</span>
<span class="t" style="left:192.20px;top:885.00px;font-size:9.5px;font-weight:700;color:#000000;letter-spacing:-0.115px;-webkit-text-stroke:0.2px #000;">Bluffton, SC (South Carolina)</span>
<span class="t" style="left:433.40px;top:885.00px;font-size:9.5px;font-weight:700;color:#000000;letter-spacing:-0.072px;-webkit-text-stroke:0.2px #000;">Redfin</span>
<span class="t" style="left:526.30px;top:886.00px;font-size:9.2px;font-weight:700;color:#1d4477;letter-spacing:0.603px;">ww.redfin.com/SC/Bluffton/503-South-Sq-29910/home/11</span>
<div class="b" style="left:526px;top:894px;width:278px;height:1px;background:#1d4477;"></div>
<span class="t" style="left:868.85px;top:885.00px;font-size:9.5px;font-weight:700;color:#000000;letter-spacing:1.263px;-webkit-text-stroke:0.2px #000;">N/A</span>
<span class="t" style="left:1023.30px;top:885.00px;font-size:9.5px;font-weight:700;color:#000000;letter-spacing:0.035px;-webkit-text-stroke:0.2px #000;">503 South Sq, Bluffton, SC29910</span>
<span class="t" style="left:1284.85px;top:885.00px;font-size:9.5px;font-weight:700;color:#000000;letter-spacing:0.531px;-webkit-text-stroke:0.2px #000;">(843)706-7368</span>
<span class="t" style="right:1512.9px;top:883px;font-size:10.5px;color:#cfcfcf;">101</span>
<span class="t" style="left:32.10px;top:900.00px;font-size:9.5px;font-weight:700;color:#000000;letter-spacing:0.387px;-webkit-text-stroke:0.2px #000;">September 4,2025</span>
<span class="t" style="left:192.20px;top:900.00px;font-size:9.5px;font-weight:700;color:#000000;letter-spacing:-0.115px;-webkit-text-stroke:0.2px #000;">Bluffton, SC (South Carolina)</span>
<span class="t" style="left:433.40px;top:900.00px;font-size:9.5px;font-weight:700;color:#000000;letter-spacing:-0.072px;-webkit-text-stroke:0.2px #000;">Redfin</span>
<span class="t" style="left:526.30px;top:901.00px;font-size:9.2px;font-weight:700;color:#1d4477;letter-spacing:0.550px;">.redfin.com/SC/Bluffton/1-W-Morningside-Dr-29910/home</span>
<div class="b" style="left:526px;top:909px;width:278px;height:1px;background:#1d4477;"></div>
<span class="t" style="left:868.85px;top:900.00px;font-size:9.5px;font-weight:700;color:#000000;letter-spacing:1.263px;-webkit-text-stroke:0.2px #000;">N/A</span>
<span class="t" style="left:1007.60px;top:900.00px;font-size:9.5px;font-weight:700;color:#000000;letter-spacing:0.110px;-webkit-text-stroke:0.2px #000;">1 W Morningside Dr, Bluffton, SC29910</span>
<span class="t" style="left:1284.85px;top:900.00px;font-size:9.5px;font-weight:700;color:#000000;letter-spacing:0.531px;-webkit-text-stroke:0.2px #000;">(843)474-0131</span>
<span class="t" style="right:1512.9px;top:898px;font-size:10.5px;color:#cfcfcf;">102</span>
<span class="t" style="left:32.10px;top:915.00px;font-size:9.5px;font-weight:700;color:#000000;letter-spacing:0.387px;-webkit-text-stroke:0.2px #000;">September 4,2025</span>
<span class="t" style="left:192.20px;top:915.00px;font-size:9.5px;font-weight:700;color:#000000;letter-spacing:-0.115px;-webkit-text-stroke:0.2px #000;">Bluffton, SC (South Carolina)</span>
<span class="t" style="left:433.40px;top:915.00px;font-size:9.5px;font-weight:700;color:#000000;letter-spacing:-0.072px;-webkit-text-stroke:0.2px #000;">Redfin</span>
<span class="t" style="left:526.30px;top:916.00px;font-size:9.2px;font-weight:700;color:#1d4477;letter-spacing:0.513px;">ww.redfin.com/SC/Bluffton/8-Buckhorn-St-29910/home/11</span>
<div class="b" style="left:526px;top:924px;width:278px;height:1px;background:#1d4477;"></div>
<span class="t" style="left:868.85px;top:915.00px;font-size:9.5px;font-weight:700;color:#000000;letter-spacing:1.263px;-webkit-text-stroke:0.2px #000;">N/A</span>
<span class="t" style="left:1022.05px;top:915.00px;font-size:9.5px;font-weight:700;color:#000000;letter-spacing:-0.022px;-webkit-text-stroke:0.2px #000;">8 Buckhorn St, Bluffton, SC29910</span>
<span class="t" style="left:1284.85px;top:915.00px;font-size:9.5px;font-weight:700;color:#000000;letter-spacing:0.531px;-webkit-text-stroke:0.2px #000;">(888)344-4246</span>
<span class="t" style="right:1512.9px;top:913px;font-size:10.5px;color:#cfcfcf;">103</span>
<span class="t" style="left:32.10px;top:930.00px;font-size:9.5px;font-weight:700;color:#000000;letter-spacing:0.387px;-webkit-text-stroke:0.2px #000;">September 4,2025</span>
<span class="t" style="left:192.20px;top:930.00px;font-size:9.5px;font-weight:700;color:#000000;letter-spacing:-0.115px;-webkit-text-stroke:0.2px #000;">Bluffton, SC (South Carolina)</span>
<span class="t" style="left:433.40px;top:930.00px;font-size:9.5px;font-weight:700;color:#000000;letter-spacing:-0.072px;-webkit-text-stroke:0.2px #000;">Redfin</span>
<span class="t" style="left:526.30px;top:931.00px;font-size:9.2px;font-weight:700;color:#1d4477;letter-spacing:0.445px;">w.redfin.com/SC/Bluffton/14-Arbormeade-Cir-29910/home/</span>
<div class="b" style="left:526px;top:939px;width:278px;height:1px;background:#1d4477;"></div>
<span class="t" style="left:868.85px;top:930.00px;font-size:9.5px;font-weight:700;color:#000000;letter-spacing:1.263px;-webkit-text-stroke:0.2px #000;">N/A</span>
<span class="t" style="left:1009.70px;top:930.00px;font-size:9.5px;font-weight:700;color:#000000;letter-spacing:0.123px;-webkit-text-stroke:0.2px #000;">14 Arbormeade Cir, Bluffton, SC29910</span>
<span class="t" style="left:1284.85px;top:930.00px;font-size:9.5px;font-weight:700;color:#000000;letter-spacing:0.531px;-webkit-text-stroke:0.2px #000;">(843)376-4453</span>
<span class="t" style="right:1512.9px;top:928px;font-size:10.5px;color:#cfcfcf;">104</span>
<span class="t" style="left:32.10px;top:945.00px;font-size:9.5px;font-weight:700;color:#000000;letter-spacing:0.387px;-webkit-text-stroke:0.2px #000;">September 4,2025</span>
<span class="t" style="left:192.20px;top:945.00px;font-size:9.5px;font-weight:700;color:#000000;letter-spacing:-0.115px;-webkit-text-stroke:0.2px #000;">Bluffton, SC (South Carolina)</span>
<span class="t" style="left:433.40px;top:945.00px;font-size:9.5px;font-weight:700;color:#000000;letter-spacing:-0.072px;-webkit-text-stroke:0.2px #000;">Redfin</span>
<span class="t" style="left:526.30px;top:946.00px;font-size:9.2px;font-weight:700;color:#1d4477;letter-spacing:0.503px;">w.redfin.com/SC/Bluffton/436-Gardners-Cir-29910/home/1</span>
<div class="b" style="left:526px;top:954px;width:278px;height:1px;background:#1d4477;"></div>
<span class="t" style="left:868.85px;top:945.00px;font-size:9.5px;font-weight:700;color:#000000;letter-spacing:1.263px;-webkit-text-stroke:0.2px #000;">N/A</span>
<span class="t" style="left:1014.80px;top:945.00px;font-size:9.5px;font-weight:700;color:#000000;letter-spacing:0.064px;-webkit-text-stroke:0.2px #000;">436 Gardners Cir, Bluffton, SC29910</span>
<span class="t" style="left:1284.85px;top:945.00px;font-size:9.5px;font-weight:700;color:#000000;letter-spacing:0.531px;-webkit-text-stroke:0.2px #000;">(843)287-9443</span>
<span class="t" style="right:1512.9px;top:943px;font-size:10.5px;color:#cfcfcf;">105</span>
<span class="t" style="left:32.10px;top:960.00px;font-size:9.5px;font-weight:700;color:#000000;letter-spacing:0.387px;-webkit-text-stroke:0.2px #000;">September 4,2025</span>
<span class="t" style="left:192.20px;top:960.00px;font-size:9.5px;font-weight:700;color:#000000;letter-spacing:-0.115px;-webkit-text-stroke:0.2px #000;">Bluffton, SC (South Carolina)</span>
<span class="t" style="left:434.25px;top:960.00px;font-size:9.5px;font-weight:700;color:#000000;letter-spacing:0.116px;-webkit-text-stroke:0.2px #000;">Zillow</span>
<span class="t" style="left:1283.60px;top:960.00px;font-size:9.5px;font-weight:700;color:#000000;letter-spacing:0.479px;-webkit-text-stroke:0.2px #000;">(843) 298-3998</span>
</body></html>
